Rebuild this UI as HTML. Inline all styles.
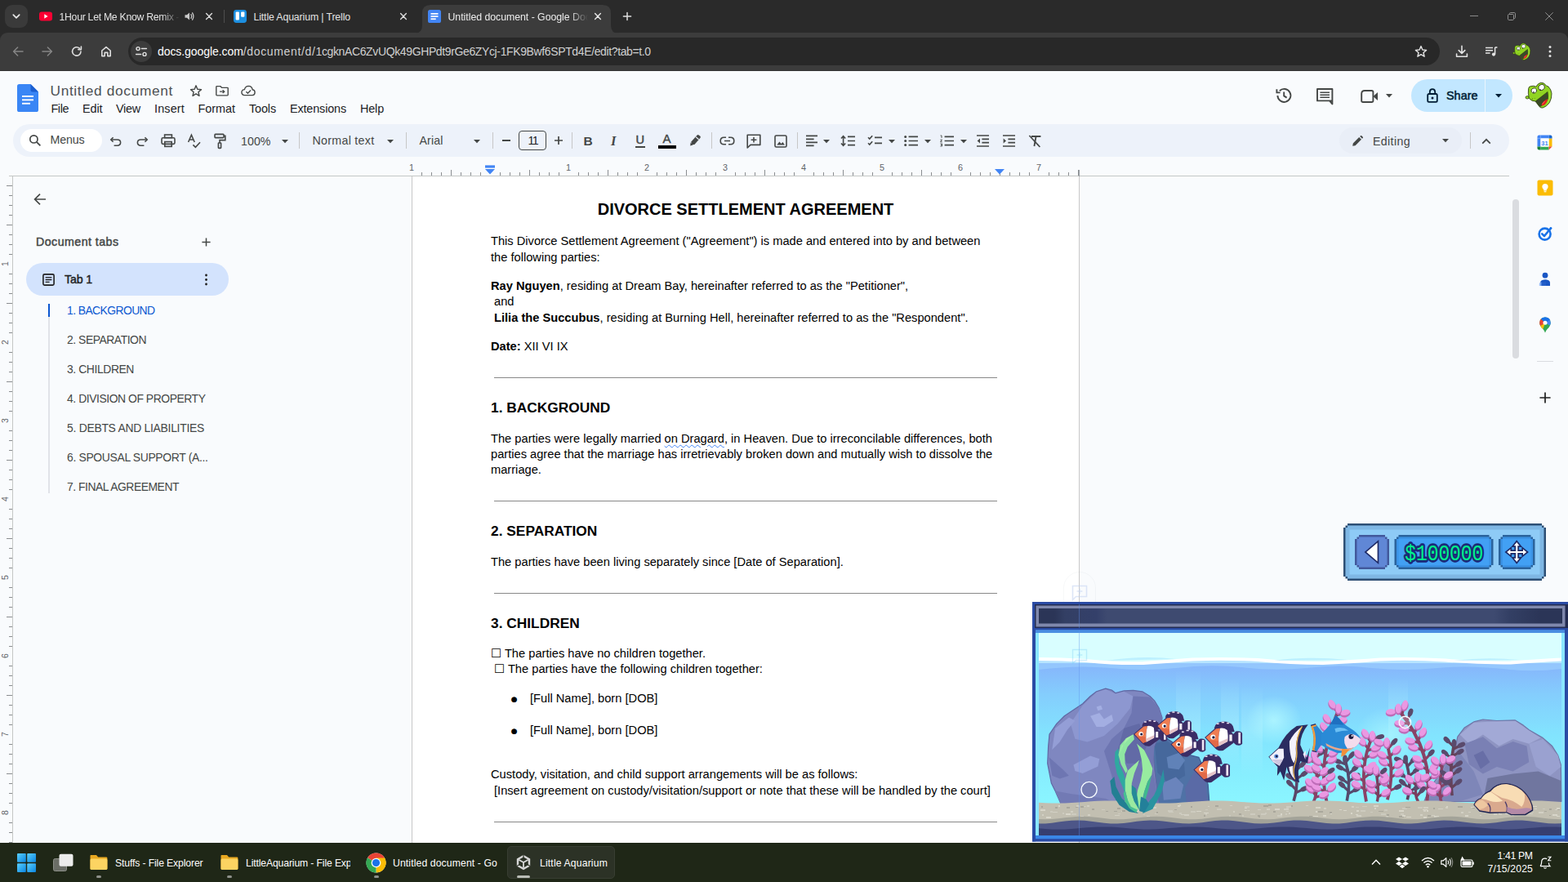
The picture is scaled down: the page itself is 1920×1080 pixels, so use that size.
<!DOCTYPE html>
<html lang="en">
<head>
<meta charset="utf-8">
<title>Untitled document - Google Docs</title>
<style>
*{box-sizing:border-box;margin:0;padding:0}
html,body{width:1920px;height:1080px;overflow:hidden;background:#f9fbfd;font-family:"Liberation Sans",sans-serif;}
.abs{position:absolute}
.t{position:absolute;white-space:nowrap;line-height:1}
svg{position:absolute;overflow:visible}
/* ---------- chrome ---------- */
#frame{position:absolute;left:0;top:0;width:1920px;height:60px;background:#2a2a2a}
#cbar{position:absolute;left:0;top:40px;width:1920px;height:46.5px;background:#3c3c3c;border-radius:9px 9px 0 0}
#omni{position:absolute;left:157px;top:46px;width:1606px;height:34px;border-radius:17px;background:#282828}
#acttab{position:absolute;left:517px;top:6px;width:231px;height:35px;background:#3c3c3c;border-radius:10px 10px 0 0}
.ct{color:#e3e3e3;font-size:12.3px}
/* ---------- docs ---------- */
#docs{position:absolute;left:0;top:87px;width:1920px;height:945px;background:#f9fbfd}
#tb{position:absolute;left:16px;top:152px;width:1832px;height:40px;border-radius:20px;background:#edf2fa}
.menu{color:#202124;font-size:14.6px;top:126px}
.ic{stroke:#444746;fill:none;stroke-width:1.6}
.sep{position:absolute;top:162px;width:1px;height:20px;background:#c7c7c7}
/* ---------- page ---------- */
#page{position:absolute;left:504px;top:216px;width:818px;height:816px;background:#fff;border-left:1px solid #c8c8c8;border-right:1px solid #c8c8c8}
.d{position:absolute;white-space:nowrap;color:#000;font-size:14.667px;line-height:17px;left:601px}
.h{position:absolute;white-space:nowrap;color:#000;font-size:17.333px;font-weight:bold;line-height:20px;left:601px}
.hr{position:absolute;left:605px;width:616px;height:1px;background:#888}
.ol{position:absolute;white-space:nowrap;color:#444746;font-size:14px;left:82px;line-height:16px}
/* ---------- taskbar ---------- */
#task{position:absolute;left:0;top:1031.5px;width:1920px;height:48.5px;background:#1f2717}
.tk{color:#fff;font-size:12.4px}
</style>
</head>
<body>
<div id="frame"></div>
<div id="cbar"></div>
<div class="abs" style="z-index:3;left:0;top:86px;width:1920px;height:1px;background:#343434"></div>
<!-- tab search -->
<div class="abs" style="left:6px;top:6px;width:28px;height:28px;border-radius:9px;background:#3a3a3a"></div>
<svg style="left:14px;top:14px" width="12" height="12" viewBox="0 0 12 12"><path d="M2.3 4.2 L6 7.8 L9.7 4.2" fill="none" stroke="#e8e8e8" stroke-width="1.7" stroke-linecap="round" stroke-linejoin="round"/></svg>
<!-- tab 1: youtube -->
<svg style="left:48px;top:14px" width="16" height="12" viewBox="0 0 16 12"><rect x="0" y="0.5" width="16" height="11" rx="3" fill="#ff0033"/><path d="M6.3 3.3 L10.6 6 L6.3 8.7Z" fill="#fff"/></svg>
<div class="abs" style="left:72px;top:8px;width:150px;height:24px;overflow:hidden;-webkit-mask-image:linear-gradient(90deg,#000 0,#000 126px,transparent 148px);mask-image:linear-gradient(90deg,#000 0,#000 126px,transparent 148px)"><span class="t" style="left:0.5px;top:4.7px;line-height:17px;font-size:12.3px;font-weight:normal;color:#e3e3e3;letter-spacing:-0.302px;">1Hour Let Me Know Remix - YouTube</span></div>
<svg style="left:225px;top:13px" width="14" height="14" viewBox="0 0 14 14"><path d="M1.5 5.2 H3.8 L7 2.4 V11.6 L3.8 8.8 H1.5Z" fill="#c9c9c9"/><path d="M9 4.6 Q10.4 7 9 9.4" fill="none" stroke="#c9c9c9" stroke-width="1.3" stroke-linecap="round"/><path d="M10.6 2.8 Q13.2 7 10.6 11.2" fill="none" stroke="#c9c9c9" stroke-width="1.3" stroke-linecap="round"/></svg>
<svg style="left:252px;top:16px" width="8" height="8" viewBox="0 0 8 8"><path d="M0.6 0.6 L7.4 7.4 M7.4 0.6 L0.6 7.4" stroke="#dcdcdc" stroke-width="1.4" fill="none" stroke-linecap="round"/></svg>
<div class="abs" style="left:274px;top:12px;width:1px;height:16px;background:#4d4d4d"></div>
<!-- tab 2: trello -->
<svg style="left:286px;top:12px" width="16" height="16" viewBox="0 0 16 16"><rect width="16" height="16" rx="3.4" fill="#1d8fe0"/><rect x="2.6" y="2.6" width="4.3" height="10" rx="1" fill="#fff"/><rect x="9.1" y="2.6" width="4.3" height="6.2" rx="1" fill="#fff"/></svg>
<span class="t" style="left:310.5px;top:12.7px;line-height:17px;font-size:12.3px;font-weight:normal;color:#e3e3e3;letter-spacing:-0.122px;">Little Aquarium &#124; Trello</span>
<svg style="left:490px;top:16px" width="8" height="8" viewBox="0 0 8 8"><path d="M0.6 0.6 L7.4 7.4 M7.4 0.6 L0.6 7.4" stroke="#dcdcdc" stroke-width="1.4" fill="none" stroke-linecap="round"/></svg>
<!-- active tab -->
<svg style="left:507px;top:6px" width="252" height="35" viewBox="0 0 252 35"><path d="M0 35 Q10 35 10 25 V10 Q10 0 20 0 H231 Q241 0 241 10 V25 Q241 35 251 35Z" fill="#3c3c3c"/></svg>
<svg style="left:524px;top:12px" width="16" height="16" viewBox="0 0 16 16"><rect width="16" height="16" rx="2.6" fill="#4285f4"/><rect x="3.5" y="4" width="9" height="1.7" fill="#fff"/><rect x="3.5" y="7.2" width="9" height="1.7" fill="#fff"/><rect x="3.5" y="10.4" width="6.2" height="1.7" fill="#fff"/></svg>
<div class="abs" style="left:548px;top:8px;width:174px;height:24px;overflow:hidden;-webkit-mask-image:linear-gradient(90deg,#000 0,#000 150px,transparent 172px);mask-image:linear-gradient(90deg,#000 0,#000 150px,transparent 172px)"><span class="t" style="left:0.5px;top:4.7px;line-height:17px;font-size:12.3px;font-weight:normal;color:#ececec;letter-spacing:-0.021px;">Untitled document - Google Docs</span></div>
<svg style="left:728px;top:16px" width="8" height="8" viewBox="0 0 8 8"><path d="M0.6 0.6 L7.4 7.4 M7.4 0.6 L0.6 7.4" stroke="#e8e8e8" stroke-width="1.4" fill="none" stroke-linecap="round"/></svg>
<svg style="left:763px;top:15px" width="10" height="10" viewBox="0 0 10 10"><path d="M5 0.4 V9.6 M0.4 5 H9.6" stroke="#e0e0e0" stroke-width="1.5" fill="none" stroke-linecap="round"/></svg>
<!-- window controls -->
<div class="abs" style="left:1800px;top:19px;width:10px;height:1px;background:#8a8a8a"></div>
<svg style="left:1846px;top:15px" width="10" height="10" viewBox="0 0 10 10"><rect x="0.5" y="2.5" width="7" height="7" rx="1.2" fill="none" stroke="#8f8f8f"/><path d="M2.5 2.2 V1.6 Q2.5 0.5 3.6 0.5 H8.2 Q9.5 0.5 9.5 1.8 V6.4 Q9.5 7.5 8.4 7.5 H7.8" fill="none" stroke="#8f8f8f"/></svg>
<svg style="left:1892px;top:15px" width="10" height="10" viewBox="0 0 10 10"><path d="M0.3 0.3 L9.7 9.7 M9.7 0.3 L0.3 9.7" stroke="#8f8f8f" stroke-width="1" fill="none"/></svg>
<!-- nav buttons -->
<svg style="left:15px;top:56px" width="14" height="14" viewBox="0 0 14 14"><path d="M13 7 H2 M6.6 2 L1.6 7 L6.6 12" fill="none" stroke="#858585" stroke-width="1.5" stroke-linecap="round" stroke-linejoin="round"/></svg>
<svg style="left:51px;top:56px" width="14" height="14" viewBox="0 0 14 14"><path d="M1 7 H12 M7.4 2 L12.4 7 L7.4 12" fill="none" stroke="#858585" stroke-width="1.5" stroke-linecap="round" stroke-linejoin="round"/></svg>
<svg style="left:87px;top:56px" width="14" height="14" viewBox="0 0 14 14"><path d="M12 7 A5.2 5.2 0 1 1 10.4 3.2" fill="none" stroke="#dedede" stroke-width="1.6" stroke-linecap="round"/><path d="M12.4 1 V4.6 H8.8" fill="none" stroke="#dedede" stroke-width="1.6" stroke-linecap="round" stroke-linejoin="round"/></svg>
<svg style="left:123px;top:56px" width="14" height="14" viewBox="0 0 14 14"><path d="M1.8 6 L7 1.6 L12.2 6 V12.6 H8.8 V8.4 H5.2 V12.6 H1.8Z" fill="none" stroke="#dedede" stroke-width="1.6" stroke-linejoin="round"/></svg>
<!-- omnibox -->
<div id="omni"></div>
<div class="abs" style="left:160px;top:50px;width:26px;height:26px;border-radius:13px;background:#3c3c3c"></div>
<svg style="left:165px;top:56px" width="16" height="14" viewBox="0 0 16 14"><circle cx="4" cy="3.6" r="2" fill="none" stroke="#e3e3e3" stroke-width="1.4"/><path d="M8.4 3.6 H14.4" stroke="#e3e3e3" stroke-width="1.5" stroke-linecap="round"/><circle cx="12" cy="10.4" r="2" fill="none" stroke="#e3e3e3" stroke-width="1.4"/><path d="M1.6 10.4 H7.6" stroke="#e3e3e3" stroke-width="1.5" stroke-linecap="round"/></svg>
<span class="t" style="left:193px;top:53.3px;line-height:20px;font-size:14px;font-weight:normal;color:#ffffff;letter-spacing:-0.070px;">docs.google.com</span><span class="t" style="left:297.8px;top:53.3px;line-height:20px;font-size:14px;font-weight:normal;color:#d0d0d0;letter-spacing:0.647px;">/document/d/</span><span class="t" style="left:386.5px;top:53.3px;line-height:20px;font-size:14px;font-weight:normal;color:#d0d0d0;letter-spacing:-0.372px;">1cgknAC6ZvUQk49GHPdt9rGe6ZYcj-1FK9Bwf6SPTd4E/edit?tab=t.0</span>
<svg style="left:1732px;top:55px" width="16" height="16" viewBox="0 0 16 16"><path d="M8 1.6 L9.9 6 L14.6 6.4 L11 9.5 L12.1 14.2 L8 11.7 L3.9 14.2 L5 9.5 L1.4 6.4 L6.1 6Z" fill="none" stroke="#e3e3e3" stroke-width="1.4" stroke-linejoin="round"/></svg>
<svg style="left:1782px;top:55px" width="16" height="16" viewBox="0 0 16 16"><path d="M8 1.4 V10 M4.2 6.6 L8 10.4 L11.8 6.6" fill="none" stroke="#e3e3e3" stroke-width="1.6" stroke-linecap="round" stroke-linejoin="round"/><path d="M1.6 11 V14.2 H14.4 V11" fill="none" stroke="#e3e3e3" stroke-width="1.6" stroke-linejoin="round" stroke-linecap="round"/></svg>
<svg style="left:1818px;top:55px" width="16" height="16" viewBox="0 0 16 16"><path d="M1 3.6 H10 M1 6.8 H10 M1 10 H6.6" stroke="#e3e3e3" stroke-width="1.5" fill="none"/><path d="M12.6 3 V11.4" stroke="#e3e3e3" stroke-width="1.5"/><path d="M12.6 3 H15.4" stroke="#e3e3e3" stroke-width="1.6"/><circle cx="11" cy="11.6" r="2.1" fill="#e3e3e3"/></svg>
<!-- frog avatar -->
<svg style="left:1846.62px;top:48.13px" width="33.59" height="30.91" viewBox="0 0 50 46"><ellipse cx="10.2" cy="25.3" rx="2.2" ry="1.7" fill="#93d624" stroke="#22300c" stroke-width="0.7"/><path d="M12.3 26.4 Q10.8 20 11.6 14.4 Q12 11.8 14.6 11.5 Q18 10.6 21 12.2 Q22.4 8.6 26.6 7.2 Q31 6.8 33.4 11 L36 12 Q39.4 15.4 40 20.4 Q40.2 26.4 37.4 31.6 Q34 36.6 29.2 38 Q26.6 38.4 25.2 36.8 L20 30 Q16 30.4 12.3 26.4Z" fill="#90d422" stroke="#22300c" stroke-width="0.8" stroke-linejoin="round"/><path d="M13.4 14.6 Q16 12.6 20.4 13.2 L22 17 L15 21Z" fill="#a4e038" opacity="0.7"/><path d="M36.6 15 Q39 19 38.8 24 Q38 30 34 34.6 Q37 28 37 22Z" fill="#a8e23c" opacity="0.8"/><path d="M20.4 29.8 L35 18.4 Q35.8 23 35.4 27 Q33 33 27.6 35.6 L25.6 36.6Z" fill="#3b4a28" stroke="#1c260c" stroke-width="0.5"/><path d="M27.4 35.2 Q28.4 30.2 34.9 27 Q35 31 31.4 34.2 Q29.4 35.8 27.4 35.2Z" fill="#e6201c"/><path d="M28.6 33.6 Q29.6 31.4 31.6 30.2" stroke="#ff8a80" stroke-width="0.7" fill="none"/><ellipse cx="18.3" cy="17" rx="3.3" ry="3.1" fill="#fff" stroke="#22300c" stroke-width="0.8" transform="rotate(-25 18.3 17)"/><ellipse cx="27.6" cy="13" rx="3.8" ry="3.4" fill="#fff" stroke="#22300c" stroke-width="0.8" transform="rotate(-25 27.6 13)"/><circle cx="17.9" cy="18.9" r="0.9" fill="#3a3a3a"/><circle cx="26.2" cy="16.2" r="0.9" fill="#2a2a2a"/><circle cx="16.3" cy="27" r="0.5" fill="#22300c"/><circle cx="19.2" cy="26.3" r="0.45" fill="#4a6a14"/></svg>
<svg style="left:1895px;top:55px" width="6" height="16" viewBox="0 0 6 16"><circle cx="3" cy="2.6" r="1.5" fill="#e3e3e3"/><circle cx="3" cy="8" r="1.5" fill="#e3e3e3"/><circle cx="3" cy="13.4" r="1.5" fill="#e3e3e3"/></svg>

<div id="docs"></div>
<!-- docs logo -->
<svg style="left:21px;top:103px" width="26" height="34" viewBox="0 0 26 34"><path d="M2.6 0 H16.5 L26 9.5 V31.4 Q26 34 23.4 34 H2.6 Q0 34 0 31.4 V2.6 Q0 0 2.6 0Z" fill="#3a86f5"/><path d="M16.5 0 L26 9.5 H18.8 Q16.5 9.5 16.5 7.2Z" fill="#1c5fd0"/><rect x="6" y="14" width="14" height="1.9" fill="#fff"/><rect x="6" y="18.4" width="14" height="1.9" fill="#fff"/><rect x="6" y="22.8" width="10" height="1.9" fill="#fff"/></svg>
<span class="t" style="left:61.5px;top:98.6px;line-height:24px;font-size:17.3px;font-weight:normal;color:#4d5053;letter-spacing:0.659px;">Untitled document</span>
<svg style="left:232px;top:103px" width="16" height="16" viewBox="0 0 16 16"><path d="M8 1.8 L9.8 6.2 L14.5 6.6 L10.9 9.7 L12 14.3 L8 11.8 L4 14.3 L5.1 9.7 L1.5 6.6 L6.2 6.2Z" fill="none" stroke="#444746" stroke-width="1.4" stroke-linejoin="round"/></svg>
<svg style="left:264px;top:105px" width="16" height="12.5" viewBox="0 0 16 14" preserveAspectRatio="none"><path d="M1.6 0.8 H6 L7.6 2.6 H14.4 Q15.2 2.6 15.2 3.4 V12.4 Q15.2 13.2 14.4 13.2 H1.6 Q0.8 13.2 0.8 12.4 V1.6 Q0.8 0.8 1.6 0.8Z" fill="none" stroke="#444746" stroke-width="1.4"/><path d="M5 8 H10.6 M8.6 5.8 L10.8 8 L8.6 10.2" fill="none" stroke="#444746" stroke-width="1.3"/></svg>
<svg style="left:295px;top:104px" width="18" height="14" viewBox="0 0 18 14"><path d="M4.6 12.6 Q0.9 12.4 0.9 9 Q1 5.8 4.4 5.6 Q5.4 1.4 9.4 1.4 Q13.4 1.5 14.2 5.8 Q17.1 6.2 17.1 9.2 Q17 12.4 14 12.6Z" fill="none" stroke="#444746" stroke-width="1.4"/><path d="M6.4 8.2 L8.4 10.2 L12 6.4" fill="none" stroke="#444746" stroke-width="1.4"/></svg>
<span class="t" style="left:62.5px;top:123.3px;line-height:20px;font-size:14.4px;font-weight:normal;color:#202124;letter-spacing:-0.426px;">File</span>
<span class="t" style="left:101px;top:123.3px;line-height:20px;font-size:14.4px;font-weight:normal;color:#202124;letter-spacing:-0.078px;">Edit</span>
<span class="t" style="left:142px;top:123.3px;line-height:20px;font-size:14.4px;font-weight:normal;color:#202124;letter-spacing:-0.234px;">View</span>
<span class="t" style="left:189px;top:123.3px;line-height:20px;font-size:14.4px;font-weight:normal;color:#202124;letter-spacing:0.167px;">Insert</span>
<span class="t" style="left:242.5px;top:123.3px;line-height:20px;font-size:14.4px;font-weight:normal;color:#202124;letter-spacing:-0.013px;">Format</span>
<span class="t" style="left:305px;top:123.3px;line-height:20px;font-size:14.4px;font-weight:normal;color:#202124;letter-spacing:-0.119px;">Tools</span>
<span class="t" style="left:355px;top:123.3px;line-height:20px;font-size:14.4px;font-weight:normal;color:#202124;letter-spacing:-0.141px;">Extensions</span>
<span class="t" style="left:441px;top:123.3px;line-height:20px;font-size:14.4px;font-weight:normal;color:#202124;letter-spacing:-0.152px;">Help</span>
<!-- right header icons -->
<svg style="left:1561px;top:106px" width="22" height="22" viewBox="0 0 22 22"><path d="M3.4 11 A8 8 0 1 0 5.8 5.2" fill="none" stroke="#444746" stroke-width="1.9"/><path d="M2.4 3.2 V7.4 H6.6" fill="none" stroke="#444746" stroke-width="1.9"/><path d="M11.2 6.6 V11.4 L14.6 13.6" fill="none" stroke="#444746" stroke-width="1.9"/></svg>
<svg style="left:1612px;top:108px" width="21" height="21" viewBox="0 0 21 21"><path d="M1 1 H19.4 V15.4 H16 L19.4 19.4 V15.4 H1Z" fill="none" stroke="#444746" stroke-width="1.9" stroke-linejoin="round"/><path d="M4.4 5.2 H16 M4.4 8.2 H16 M4.4 11.2 H16" stroke="#444746" stroke-width="1.5"/></svg>
<svg style="left:1666px;top:110px" width="22" height="16" viewBox="0 0 22 16"><path d="M5 1 H13.6 Q15.4 1 15.4 2.8 V13.2 Q15.4 15 13.6 15 H3 Q1.2 15 1.2 13.2 V4.8 Q1.2 1 5 1Z" fill="none" stroke="#444746" stroke-width="1.9"/><path d="M15.4 8 L21 3 V13Z" fill="#444746"/></svg>
<svg style="left:1697px;top:115px" width="8" height="5" viewBox="0 0 8 5"><path d="M0 0 H8 L4 4.4Z" fill="#444746"/></svg>
<!-- share -->
<div class="abs" style="left:1728px;top:97px;width:124px;height:40px;border-radius:20px;background:#c2e7ff"></div>
<div class="abs" style="left:1818px;top:97px;width:1px;height:40px;background:#eaf5fd"></div>
<svg style="left:1747px;top:108px" width="14" height="18" viewBox="0 0 14 18"><rect x="1.2" y="7" width="11.6" height="9.8" rx="1.6" fill="none" stroke="#001d35" stroke-width="1.8"/><path d="M3.8 7 V4.6 Q3.8 1.2 7 1.2 Q10.2 1.2 10.2 4.6 V7" fill="none" stroke="#001d35" stroke-width="1.8"/><circle cx="7" cy="12" r="1.5" fill="#001d35"/></svg>
<span class="t" style="left:1771px;top:107.3px;line-height:20px;font-size:14.4px;font-weight:normal;color:#001d35;letter-spacing:0.019px;-webkit-text-stroke:0.5px #001d35;">Share</span>
<svg style="left:1831px;top:115px" width="8" height="5" viewBox="0 0 8 5"><path d="M0 0 H8 L4 4.4Z" fill="#001d35"/></svg>
<!-- frog avatar big -->
<svg style="left:1860px;top:94px" width="50" height="46" viewBox="0 0 50 46"><ellipse cx="10.2" cy="25.3" rx="2.2" ry="1.7" fill="#93d624" stroke="#22300c" stroke-width="0.7"/><path d="M12.3 26.4 Q10.8 20 11.6 14.4 Q12 11.8 14.6 11.5 Q18 10.6 21 12.2 Q22.4 8.6 26.6 7.2 Q31 6.8 33.4 11 L36 12 Q39.4 15.4 40 20.4 Q40.2 26.4 37.4 31.6 Q34 36.6 29.2 38 Q26.6 38.4 25.2 36.8 L20 30 Q16 30.4 12.3 26.4Z" fill="#90d422" stroke="#22300c" stroke-width="0.8" stroke-linejoin="round"/><path d="M13.4 14.6 Q16 12.6 20.4 13.2 L22 17 L15 21Z" fill="#a4e038" opacity="0.7"/><path d="M36.6 15 Q39 19 38.8 24 Q38 30 34 34.6 Q37 28 37 22Z" fill="#a8e23c" opacity="0.8"/><path d="M20.4 29.8 L35 18.4 Q35.8 23 35.4 27 Q33 33 27.6 35.6 L25.6 36.6Z" fill="#3b4a28" stroke="#1c260c" stroke-width="0.5"/><path d="M27.4 35.2 Q28.4 30.2 34.9 27 Q35 31 31.4 34.2 Q29.4 35.8 27.4 35.2Z" fill="#e6201c"/><path d="M28.6 33.6 Q29.6 31.4 31.6 30.2" stroke="#ff8a80" stroke-width="0.7" fill="none"/><ellipse cx="18.3" cy="17" rx="3.3" ry="3.1" fill="#fff" stroke="#22300c" stroke-width="0.8" transform="rotate(-25 18.3 17)"/><ellipse cx="27.6" cy="13" rx="3.8" ry="3.4" fill="#fff" stroke="#22300c" stroke-width="0.8" transform="rotate(-25 27.6 13)"/><circle cx="17.9" cy="18.9" r="0.9" fill="#3a3a3a"/><circle cx="26.2" cy="16.2" r="0.9" fill="#2a2a2a"/><circle cx="16.3" cy="27" r="0.5" fill="#22300c"/><circle cx="19.2" cy="26.3" r="0.45" fill="#4a6a14"/></svg>
<!-- toolbar -->
<div id="tb"></div>
<div class="abs" style="left:25px;top:158px;width:100px;height:28px;border-radius:14px;background:#fff"></div>
<svg style="left:35px;top:164px" width="16" height="16" viewBox="0 0 16 16"><circle cx="6.4" cy="6.4" r="4.6" fill="none" stroke="#444746" stroke-width="1.7"/><path d="M9.8 9.8 L14.4 14.4" stroke="#444746" stroke-width="1.8"/></svg>
<span class="t" style="left:61.5px;top:161.3px;line-height:20px;font-size:14.2px;font-weight:normal;color:#444746;letter-spacing:-0.119px;">Menus</span>
<svg style="left:134px;top:165px" width="16" height="16" viewBox="0 0 16 16"><path d="M4.6 3.2 L1.8 6 L4.6 8.8" class="ic"/><path d="M2 6 H9.6 Q13.6 6 13.6 9.6 Q13.6 13.2 9.6 13.2 H5.6" class="ic"/></svg>
<svg style="left:166px;top:165px" width="16" height="16" viewBox="0 0 16 16"><path d="M11.4 3.2 L14.2 6 L11.4 8.8" class="ic"/><path d="M14 6 H6.4 Q2.4 6 2.4 9.6 Q2.4 13.2 6.4 13.2 H10.4" class="ic"/></svg>
<svg style="left:197px;top:164px" width="18" height="17" viewBox="0 0 18 17"><rect x="4.6" y="1" width="8.8" height="3.6" class="ic"/><rect x="1" y="4.8" width="16" height="7.6" rx="1.6" class="ic"/><rect x="4.8" y="9.6" width="8.4" height="5.8" fill="#edf2fa" class="ic"/></svg>
<svg style="left:229px;top:164px" width="18" height="18" viewBox="0 0 18 18"><path d="M1.6 10 L5.4 1.2 L9.2 10 M3 7 H7.8" class="ic"/><path d="M7.4 13.4 L10.4 16.4 L16 10.2" class="ic"/></svg>
<svg style="left:261px;top:163px" width="16" height="20" viewBox="0 0 16 20"><rect x="2" y="1.4" width="11" height="4.2" rx="0.8" class="ic"/><path d="M13 3.4 H14.8 V8.6 H8 V12" class="ic"/><rect x="6.4" y="12" width="3.2" height="6.4" rx="0.6" class="ic"/></svg>
<span class="t" style="left:295px;top:163.3px;line-height:20px;font-size:14.2px;font-weight:normal;color:#444746;letter-spacing:0.051px;">100%</span>
<svg style="left:345px;top:171px" width="8" height="5" viewBox="0 0 8 5"><path d="M0 0 H8 L4 4.2Z" fill="#444746"/></svg>
<div class="sep" style="left:366px"></div>
<span class="t" style="left:382.5px;top:162.3px;line-height:20px;font-size:14.2px;font-weight:normal;color:#444746;letter-spacing:0.315px;">Normal text</span>
<svg style="left:474px;top:171px" width="8" height="5" viewBox="0 0 8 5"><path d="M0 0 H8 L4 4.2Z" fill="#444746"/></svg>
<div class="sep" style="left:497px"></div>
<span class="t" style="left:513.5px;top:162.3px;line-height:20px;font-size:14.2px;font-weight:normal;color:#444746;letter-spacing:0.122px;">Arial</span>
<svg style="left:580px;top:171px" width="8" height="5" viewBox="0 0 8 5"><path d="M0 0 H8 L4 4.2Z" fill="#444746"/></svg>
<div class="sep" style="left:603px"></div>
<div class="abs" style="left:615px;top:171px;width:10px;height:2px;background:#444746"></div>
<div class="abs" style="left:635px;top:160px;width:34px;height:24px;border:1px solid #444746;border-radius:4px"></div>
<span class="t" style="left:646.5px;top:162.3px;line-height:20px;font-size:14.2px;font-weight:normal;color:#202124;letter-spacing:-1.617px;">11</span>
<svg style="left:678px;top:166px" width="12" height="12" viewBox="0 0 12 12"><path d="M6 1 V11 M1 6 H11" stroke="#444746" stroke-width="1.7" fill="none"/></svg>
<div class="sep" style="left:700px"></div>
<span class="t" style="left:714.5px;top:162px;line-height:22px;font-size:15.5px;font-weight:bold;color:#444746;letter-spacing:-0.703px;">B</span>
<span class="t" style="left:748px;top:161.1px;line-height:23px;font-size:16.5px;font-weight:bold;color:#444746;letter-spacing:3.406px;font-family:'Liberation Serif',serif;font-style:italic;">I</span>
<span class="t" style="left:778.6px;top:161.4px;line-height:20px;font-size:14.6px;font-weight:normal;color:#444746;letter-spacing:0.253px;-webkit-text-stroke:0.5px #444746;">U</span><div class="abs" style="left:778px;top:179px;width:12px;height:1.6px;background:#444746"></div>
<span class="t" style="left:811.6px;top:159.1px;line-height:21px;font-size:15px;font-weight:normal;color:#444746;letter-spacing:0.784px;-webkit-text-stroke:0.4px #444746;">A</span>
<div class="abs" style="left:806px;top:178px;width:22px;height:4px;background:#000"></div>
<svg style="left:842px;top:162px" width="18" height="18" viewBox="0 0 18 18"><path d="M4.4 11.6 L11.6 3.4 Q12.6 2.4 13.8 3.4 L15.4 4.8 Q16.4 5.8 15.4 7 L8.4 15 L4.6 15.2Z" fill="#444746"/><path d="M3.6 12.6 L6.4 15.4 L3.2 16.6Z" fill="#444746"/><path d="M10 5.6 L13.6 8.8" stroke="#edf2fa" stroke-width="1.2"/></svg>
<div class="sep" style="left:871px"></div>
<svg style="left:881px;top:167px" width="19" height="11" viewBox="0 0 19 11"><path d="M8 1.2 H5.4 Q1.2 1.2 1.2 5.5 Q1.2 9.8 5.4 9.8 H8 M11 1.2 H13.6 Q17.8 1.2 17.8 5.5 Q17.8 9.8 13.6 9.8 H11 M6 5.5 H13" class="ic" stroke-width="1.8"/></svg>
<svg style="left:914px;top:164px" width="18" height="18" viewBox="0 0 18 18"><path d="M1.2 1.2 H16.8 V13.4 H5 L1.2 17Z" class="ic" stroke-linejoin="round"/><path d="M9 4 V10.6 M5.6 7.3 H12.4" class="ic"/></svg>
<svg style="left:948px;top:165px" width="16" height="16" viewBox="0 0 16 16"><rect x="1" y="1" width="14" height="14" rx="1.6" class="ic"/><path d="M3.2 12.4 L6.4 8.4 L8.6 11 L10.4 9 L13 12.4Z" fill="#444746"/></svg>
<div class="sep" style="left:976px"></div>
<svg style="left:987px;top:165px" width="14" height="15" viewBox="0 0 14 15"><path d="M0 1.4 H14 M0 5.4 H9.6 M0 9.4 H14 M0 13.4 H9.6" stroke="#444746" stroke-width="1.6"/></svg>
<svg style="left:1008px;top:171px" width="8" height="5" viewBox="0 0 8 5"><path d="M0 0 H8 L4 4.2Z" fill="#444746"/></svg>
<svg style="left:1029px;top:165px" width="18" height="15" viewBox="0 0 18 15"><path d="M3.6 2 V13 M1 4.6 L3.6 1.6 L6.2 4.6 M1 10.4 L3.6 13.4 L6.2 10.4" class="ic"/><path d="M9 2.4 H18 M9 7.5 H18 M9 12.6 H18" stroke="#444746" stroke-width="1.6"/></svg>
<svg style="left:1062px;top:165px" width="18" height="15" viewBox="0 0 18 15"><path d="M1 3.2 L2.8 5 L6.2 1.2 M1 10.2 L2.8 12 L6.2 8.2" class="ic"/><path d="M9 3.4 H18 M9 10.4 H18" stroke="#444746" stroke-width="1.7"/></svg>
<svg style="left:1088px;top:171px" width="8" height="5" viewBox="0 0 8 5"><path d="M0 0 H8 L4 4.2Z" fill="#444746"/></svg>
<svg style="left:1107px;top:165px" width="17" height="15" viewBox="0 0 17 15"><circle cx="1.7" cy="2.4" r="1.5" fill="#444746"/><circle cx="1.7" cy="7.5" r="1.5" fill="#444746"/><circle cx="1.7" cy="12.6" r="1.5" fill="#444746"/><path d="M5.6 2.4 H17 M5.6 7.5 H17 M5.6 12.6 H17" stroke="#444746" stroke-width="1.7"/></svg>
<svg style="left:1132px;top:171px" width="8" height="5" viewBox="0 0 8 5"><path d="M0 0 H8 L4 4.2Z" fill="#444746"/></svg>
<svg style="left:1151px;top:165px" width="17" height="15" viewBox="0 0 17 15"><path d="M0.6 1 H2 V4 M0.4 6.2 H2.6 L0.4 8.8 H2.8 M0.4 11 H2.6 V14 H0.4 M1 12.5 H2.6" fill="none" stroke="#444746" stroke-width="0.9"/><path d="M5.6 2.4 H17 M5.6 7.5 H17 M5.6 12.6 H17" stroke="#444746" stroke-width="1.7"/></svg>
<svg style="left:1176px;top:171px" width="8" height="5" viewBox="0 0 8 5"><path d="M0 0 H8 L4 4.2Z" fill="#444746"/></svg>
<svg style="left:1196px;top:165px" width="15" height="15" viewBox="0 0 15 15"><path d="M0 1 H15 M6.4 5.4 H15 M6.4 9.6 H15 M0 14 H15" stroke="#444746" stroke-width="1.6"/><path d="M4 4.6 V10.4 L0.6 7.5Z" fill="#444746"/></svg>
<svg style="left:1228px;top:165px" width="15" height="15" viewBox="0 0 15 15"><path d="M0 1 H15 M6.4 5.4 H15 M6.4 9.6 H15 M0 14 H15" stroke="#444746" stroke-width="1.6"/><path d="M0.6 4.6 V10.4 L4 7.5Z" fill="#444746"/></svg>
<svg style="left:1259px;top:165px" width="17" height="16" viewBox="0 0 17 16"><path d="M4 2 H15.4 M9.6 2 L7.4 14" stroke="#444746" stroke-width="1.8" fill="none"/><path d="M1.4 1 L14.4 15" stroke="#444746" stroke-width="1.7"/></svg>
<!-- editing -->
<div class="abs" style="left:1640px;top:156px;width:150px;height:32px;border-radius:16px;background:#e9eef7"></div>
<svg style="left:1655px;top:165px" width="15" height="15" viewBox="0 0 15 15"><path d="M1.2 13.8 L1.8 10.4 L9.2 3 L12 5.800 L4.6 13.2 Z M10.2 2 L11 1.2 Q11.8 0.600 12.6 1.4 L13.600 2.400 Q14.4 3.200 13.800 4 L13 4.800Z" fill="#444746"/></svg>
<span class="t" style="left:1681px;top:162.5px;line-height:20px;font-size:14.2px;font-weight:normal;color:#444746;letter-spacing:0.373px;">Editing</span>
<svg style="left:1766px;top:170px" width="8" height="5" viewBox="0 0 8 5"><path d="M0 0 H8 L4 4.2Z" fill="#444746"/></svg>
<div class="sep" style="left:1800px"></div>
<svg style="left:1814px;top:169px" width="12" height="8" viewBox="0 0 12 8"><path d="M1.2 6.6 L6 1.8 L10.8 6.6" fill="none" stroke="#444746" stroke-width="1.7"/></svg>

<svg style="left:41px;top:236px" width="16" height="16" viewBox="0 0 16 16"><path d="M15 8 H2 M8 1.6 L1.6 8 L8 14.4" fill="none" stroke="#444746" stroke-width="1.7"/></svg>
<span class="t" style="left:44px;top:286.3px;line-height:20px;font-size:14.2px;font-weight:normal;color:#444746;letter-spacing:0.468px;-webkit-text-stroke:0.45px #444746;">Document tabs</span>
<svg style="left:247px;top:291px" width="11" height="11" viewBox="0 0 11 11"><path d="M5.5 0.4 V10.6 M0.4 5.5 H10.6" stroke="#444746" stroke-width="1.5" fill="none"/></svg>
<div class="abs" style="left:32px;top:322px;width:248px;height:40px;border-radius:20px;background:#d3e3fd"></div>
<svg style="left:52px;top:335px" width="15" height="15" viewBox="0 0 15 15"><rect x="0.9" y="0.9" width="13.2" height="13.2" rx="1.6" fill="none" stroke="#1f1f1f" stroke-width="1.6"/><path d="M3.6 4.6 H11.4 M3.6 7.5 H11.4 M3.6 10.4 H8.6" stroke="#1f1f1f" stroke-width="1.4"/></svg>
<span class="t" style="left:79px;top:332.3px;line-height:20px;font-size:14.2px;font-weight:normal;color:#1f1f1f;letter-spacing:-0.144px;-webkit-text-stroke:0.45px #1f1f1f;">Tab 1</span>
<svg style="left:250px;top:335px" width="5" height="15" viewBox="0 0 5 15"><circle cx="2.5" cy="2" r="1.4" fill="#1f1f1f"/><circle cx="2.5" cy="7.5" r="1.4" fill="#1f1f1f"/><circle cx="2.5" cy="13" r="1.4" fill="#1f1f1f"/></svg>
<div class="abs" style="left:59px;top:372px;width:2px;height:232px;background:#e1e3e8"></div>
<div class="abs" style="left:59px;top:372px;width:2px;height:16px;background:#0b57d0"></div>
<span class="t" style="left:82px;top:370.8px;line-height:19px;font-size:13.9px;font-weight:normal;color:#0b57d0;letter-spacing:-0.578px;">1. BACKGROUND</span>
<span class="t" style="left:82px;top:406.8px;line-height:19px;font-size:13.9px;font-weight:normal;color:#444746;letter-spacing:-0.456px;">2. SEPARATION</span>
<span class="t" style="left:82px;top:442.8px;line-height:19px;font-size:13.9px;font-weight:normal;color:#444746;letter-spacing:-0.405px;">3. CHILDREN</span>
<span class="t" style="left:82px;top:478.8px;line-height:19px;font-size:13.9px;font-weight:normal;color:#444746;letter-spacing:-0.439px;">4. DIVISION OF PROPERTY</span>
<span class="t" style="left:82px;top:514.8px;line-height:19px;font-size:13.9px;font-weight:normal;color:#444746;letter-spacing:-0.270px;">5. DEBTS AND LIABILITIES</span>
<span class="t" style="left:82px;top:550.8px;line-height:19px;font-size:13.9px;font-weight:normal;color:#444746;letter-spacing:-0.329px;">6. SPOUSAL SUPPORT (A...</span>
<span class="t" style="left:82px;top:586.8px;line-height:19px;font-size:13.9px;font-weight:normal;color:#444746;letter-spacing:-0.465px;">7. FINAL AGREEMENT</span>
<!-- rulers -->
<div class="abs" style="left:11px;top:215px;width:1837px;height:1px;background:#c4c7c5"></div>
<svg style="left:0;top:0" width="1920" height="216" viewBox="0 0 1920 216"><path d="M516.5 211V215 M528.5 211V215 M540.5 211V215 M552.5 208V215 M564.5 211V215 M576.5 211V215 M588.5 211V215 M612.5 211V215 M624.5 211V215 M636.5 211V215 M648.5 208V215 M660.5 211V215 M672.5 211V215 M684.5 211V215 M708.5 211V215 M720.5 211V215 M732.5 211V215 M744.5 208V215 M756.5 211V215 M768.5 211V215 M780.5 211V215 M804.5 211V215 M816.5 211V215 M828.5 211V215 M840.5 208V215 M852.5 211V215 M864.5 211V215 M876.5 211V215 M900.5 211V215 M912.5 211V215 M924.5 211V215 M936.5 208V215 M948.5 211V215 M960.5 211V215 M972.5 211V215 M996.5 211V215 M1008.5 211V215 M1020.5 211V215 M1032.5 208V215 M1044.5 211V215 M1056.5 211V215 M1068.5 211V215 M1092.5 211V215 M1104.5 211V215 M1116.5 211V215 M1128.5 208V215 M1140.5 211V215 M1152.5 211V215 M1164.5 211V215 M1188.5 211V215 M1200.5 211V215 M1212.5 211V215 M1224.5 208V215 M1236.5 211V215 M1248.5 211V215 M1260.5 211V215 M1284.5 211V215 M1296.5 211V215 M1308.5 211V215 M1320.5 208V215" stroke="#8a8d90" stroke-width="1" fill="none"/><path d="M1321.5 208V216" stroke="#9aa0a6" stroke-width="1"/><path d="M594 202.4H606V205.6H594Z" fill="#4285f4"/><path d="M594 207H606L600 213.6Z" fill="#4285f4"/><path d="M1218 207H1230L1224 213.4Z" fill="#4285f4"/></svg>
<span class="t" style="left:499px;top:199px;width:10px;text-align:center;font-size:10.8px;line-height:12px;color:#5f6368">1</span>
<span class="t" style="left:691px;top:199px;width:10px;text-align:center;font-size:10.8px;line-height:12px;color:#5f6368">1</span>
<span class="t" style="left:787px;top:199px;width:10px;text-align:center;font-size:10.8px;line-height:12px;color:#5f6368">2</span>
<span class="t" style="left:883px;top:199px;width:10px;text-align:center;font-size:10.8px;line-height:12px;color:#5f6368">3</span>
<span class="t" style="left:979px;top:199px;width:10px;text-align:center;font-size:10.8px;line-height:12px;color:#5f6368">4</span>
<span class="t" style="left:1075px;top:199px;width:10px;text-align:center;font-size:10.8px;line-height:12px;color:#5f6368">5</span>
<span class="t" style="left:1171px;top:199px;width:10px;text-align:center;font-size:10.8px;line-height:12px;color:#5f6368">6</span>
<span class="t" style="left:1267px;top:199px;width:10px;text-align:center;font-size:10.8px;line-height:12px;color:#5f6368">7</span>
<div class="abs" style="left:15px;top:215px;width:1px;height:817px;background:#c4c7c5"></div>
<svg style="left:0;top:0" width="20" height="1032" viewBox="0 0 20 1032"><path d="M8 227.5H15 M11 239.5H15 M11 251.5H15 M11 263.5H15 M8 275.5H15 M11 287.5H15 M11 299.5H15 M11 311.5H15 M11 335.5H15 M11 347.5H15 M11 359.5H15 M8 371.5H15 M11 383.5H15 M11 395.5H15 M11 407.5H15 M11 431.5H15 M11 443.5H15 M11 455.5H15 M8 467.5H15 M11 479.5H15 M11 491.5H15 M11 503.5H15 M11 527.5H15 M11 539.5H15 M11 551.5H15 M8 563.5H15 M11 575.5H15 M11 587.5H15 M11 599.5H15 M11 623.5H15 M11 635.5H15 M11 647.5H15 M8 659.5H15 M11 671.5H15 M11 683.5H15 M11 695.5H15 M11 719.5H15 M11 731.5H15 M11 743.5H15 M8 755.5H15 M11 767.5H15 M11 779.5H15 M11 791.5H15 M11 815.5H15 M11 827.5H15 M11 839.5H15 M8 851.5H15 M11 863.5H15 M11 875.5H15 M11 887.5H15 M11 911.5H15 M11 923.5H15 M11 935.5H15 M8 947.5H15 M11 959.5H15 M11 971.5H15 M11 983.5H15 M11 1007.5H15 M11 1019.5H15 M11 1031.5H15" stroke="#8a8d90" stroke-width="1" fill="none"/></svg>
<span class="t" style="left:0px;top:318px;width:12px;height:10px;text-align:center;font-size:10.5px;line-height:10px;color:#5f6368;transform:rotate(-90deg);transform-origin:6px 5px">1</span>
<span class="t" style="left:0px;top:414px;width:12px;height:10px;text-align:center;font-size:10.5px;line-height:10px;color:#5f6368;transform:rotate(-90deg);transform-origin:6px 5px">2</span>
<span class="t" style="left:0px;top:510px;width:12px;height:10px;text-align:center;font-size:10.5px;line-height:10px;color:#5f6368;transform:rotate(-90deg);transform-origin:6px 5px">3</span>
<span class="t" style="left:0px;top:606px;width:12px;height:10px;text-align:center;font-size:10.5px;line-height:10px;color:#5f6368;transform:rotate(-90deg);transform-origin:6px 5px">4</span>
<span class="t" style="left:0px;top:702px;width:12px;height:10px;text-align:center;font-size:10.5px;line-height:10px;color:#5f6368;transform:rotate(-90deg);transform-origin:6px 5px">5</span>
<span class="t" style="left:0px;top:798px;width:12px;height:10px;text-align:center;font-size:10.5px;line-height:10px;color:#5f6368;transform:rotate(-90deg);transform-origin:6px 5px">6</span>
<span class="t" style="left:0px;top:894px;width:12px;height:10px;text-align:center;font-size:10.5px;line-height:10px;color:#5f6368;transform:rotate(-90deg);transform-origin:6px 5px">7</span>
<span class="t" style="left:0px;top:990px;width:12px;height:10px;text-align:center;font-size:10.5px;line-height:10px;color:#5f6368;transform:rotate(-90deg);transform-origin:6px 5px">8</span>
<div id="page"></div>
<div class="d" style="left:731.7px;top:245px;font-size:20px;font-weight:bold;line-height:23px">DIVORCE SETTLEMENT AGREEMENT</div>
<div class="d" style="top:287px">This Divorce Settlement Agreement ("Agreement") is made and entered into by and between</div>
<div class="d" style="top:307px">the following parties:</div>
<div class="d" style="top:342px"><b>Ray Nguyen</b>, residing at Dream Bay, hereinafter referred to as the "Petitioner",</div>
<div class="d" style="top:361px;left:605px">and</div>
<div class="d" style="top:381px;left:605px"><b>Lilia the Succubus</b>, residing at Burning Hell, hereinafter referred to as the "Respondent".</div>
<div class="d" style="top:416px"><b>Date:</b> XII VI IX</div>
<div class="hr" style="top:462px"></div>
<div class="h" style="top:489px">1. BACKGROUND</div>
<div class="d" style="top:529px">The parties were legally married <span style="text-decoration:underline wavy #4285f4 1px;text-underline-offset:2px">on Dragard</span>, in Heaven. Due to irreconcilable differences, both</div>
<div class="d" style="top:548px">parties agree that the marriage has irretrievably broken down and mutually wish to dissolve the</div>
<div class="d" style="top:567px">marriage.</div>
<div class="hr" style="top:613px"></div>
<div class="h" style="top:640px">2. SEPARATION</div>
<div class="d" style="top:680px">The parties have been living separately since [Date of Separation].</div>
<div class="hr" style="top:726px"></div>
<div class="h" style="top:753px">3. CHILDREN</div>
<div class="d" style="top:792px"><span style="font-family:'DejaVu Sans',sans-serif;font-size:14.6px;line-height:1">☐</span> The parties have no children together.</div>
<div class="d" style="top:811px;left:605px"><span style="font-family:'DejaVu Sans',sans-serif;font-size:14.6px;line-height:1">☐</span> The parties have the following children together:</div>
<div class="d" style="top:847px;left:649px">[Full Name], born [DOB]</div>
<div class="d" style="top:886px;left:649px">[Full Name], born [DOB]</div>
<span class="t" style="left:625.7px;top:846.6px;line-height:18px;font-size:9px;color:#000;font-family:'DejaVu Sans',sans-serif">●</span>
<span class="t" style="left:625.7px;top:885.6px;line-height:18px;font-size:9px;color:#000;font-family:'DejaVu Sans',sans-serif">●</span>
<div class="d" style="top:940px">Custody, visitation, and child support arrangements will be as follows:</div>
<div class="d" style="top:960px;left:605px">[Insert agreement on custody/visitation/support or note that these will be handled by the court]</div>
<div class="hr" style="top:1006px"></div>

<!-- scrollbar -->
<div class="abs" style="left:1852px;top:244px;width:8px;height:195px;border-radius:4px;background:#dadce0"></div>
<!-- side panel icons -->
<svg style="left:1882px;top:165px" width="19" height="19" viewBox="0 0 19 19"><rect x="1" y="1" width="17" height="17" rx="1.5" fill="#fff"/><path d="M4.5 0.5 H14.5 V4.5 H4.5Z" fill="#4285f4"/><path d="M0.5 4.5 H4.5 V14.5 H0.5Z" fill="#4285f4"/><path d="M14.5 4.5 H18.5 V14.5 H14.5Z" fill="#fbbc04"/><path d="M4.5 14.5 H14.5 V18.5 H4.5Z" fill="#34a853"/><path d="M0.5 2.5 Q0.5 0.5 2.5 0.5 H4.5 V4.5 H0.5Z" fill="#4285f4"/><path d="M14.5 0.5 H16.5 Q18.5 0.5 18.5 2.5 V4.5 H14.5Z" fill="#1967d2"/><path d="M0.5 14.5 H4.5 V18.5 H2.5 Q0.5 18.5 0.5 16.5Z" fill="#188038"/><path d="M14.5 14.5 H18.5 L14.5 18.5Z" fill="#ea4335"/><rect x="4.5" y="4.5" width="10" height="10" fill="#fff"/><text x="9.5" y="12.6" font-size="7.5" font-weight="bold" text-anchor="middle" fill="#4285f4" font-family="Liberation Sans, sans-serif">31</text></svg>
<svg style="left:1882px;top:220px" width="20" height="20" viewBox="0 0 20 20"><rect x="0.5" y="0.5" width="19" height="19" rx="2" fill="#fbbc04"/><circle cx="10" cy="8.6" r="3.6" fill="#fff"/><rect x="8.2" y="12" width="3.6" height="1.5" fill="#fff"/><rect x="8.6" y="14.2" width="2.8" height="1.1" fill="#fff"/></svg>
<svg style="left:1882px;top:276px" width="20" height="20" viewBox="0 0 20 20"><circle cx="9.6" cy="10.6" r="7" fill="none" stroke="#1a73e8" stroke-width="2.6"/><path d="M6.2 10.4 L9 13 L17 3.4" fill="none" stroke="#1a73e8" stroke-width="2.6" stroke-linecap="round" stroke-linejoin="round"/><circle cx="17" cy="3.6" r="1.3" fill="#1a73e8"/></svg>
<svg style="left:1884px;top:333px" width="16" height="18" viewBox="0 0 16 18"><circle cx="8" cy="4.2" r="3.4" fill="#1a56c4"/><path d="M2 17 V13.4 Q2 9.4 8 9.4 Q14 9.4 14 13.4 V17Z" fill="#1a56c4"/><path d="M0.8 17 V14.6 Q0.8 12.6 3 12.6 H9 V17Z" fill="#8ab4f8" opacity="0.85"/><path d="M3.4 17 V13.4 Q3.6 10 8 9.6 Q12.6 9.8 13.6 12.6 V17Z" fill="#1a56c4" opacity="0.9"/></svg>
<svg style="left:1884px;top:388px" width="16" height="20" viewBox="0 0 16 20"><path d="M8 0.6 Q14.6 0.8 14.8 7.4 Q14.6 11 10.6 15 Q8.8 17 8 19.4 Q7.2 17 5.4 15 Q1.4 11 1.2 7.4 Q1.4 0.8 8 0.6Z" fill="#34a853"/><path d="M8 0.6 Q14.6 0.8 14.8 7.4 Q14.7 9 13.8 10.6 L8 7.4 L3 2.6 Q5 0.7 8 0.6Z" fill="#4285f4"/><path d="M3 2.6 L8 7.4 L2.2 11 Q1.2 9.2 1.2 7.4 Q1.3 4.4 3 2.6Z" fill="#ea4335"/><path d="M2.2 11 L8 7.4 L5.4 15 Q3.2 12.8 2.2 11Z" fill="#fbbc04"/><path d="M8 0.6 Q12 0.7 13.8 3.8 L8 7.4 L3 2.6 Q5 0.7 8 0.6Z" fill="#1a73e8"/><circle cx="8" cy="7.2" r="2.5" fill="#fff"/></svg>
<div class="abs" style="left:1882px;top:442px;width:20px;height:1px;background:#dadce0"></div>
<svg style="left:1885px;top:480px" width="14" height="14" viewBox="0 0 14 14"><path d="M7 0.4 V13.6 M0.4 7 H13.6" stroke="#1f1f1f" stroke-width="1.7" fill="none"/></svg>

<div class="abs" style="left:1302px;top:700px;width:40px;height:130px;border-radius:20px;border:1px solid rgba(120,130,150,.06)"></div>
<svg style="left:1312px;top:716px" width="20" height="20" viewBox="0 0 20 20" opacity="0.55"><path d="M1.5 1.5 H18.500 V14.5 H5.5 L1.5 18.500Z" fill="none" stroke="#c3d3f2" stroke-width="1.6"/><path d="M10 4.600 V11.4 M6.600 8 H13.4" stroke="#c3d3f2" stroke-width="1.6"/></svg>
<svg style="left:1264px;top:737px" width="656" height="294" viewBox="1264 737 656 294">
<defs><linearGradient id="wg" x1="0" y1="0" x2="0" y2="1"><stop offset="0" stop-color="#86b4fb"/><stop offset="0.18" stop-color="#84cdfd"/><stop offset="0.42" stop-color="#82e4fe"/><stop offset="0.8" stop-color="#8af5ff"/><stop offset="1" stop-color="#8af5ff"/></linearGradient><linearGradient id="lid" x1="0" y1="0" x2="1" y2="0"><stop offset="0" stop-color="#2b3557"/><stop offset="0.03" stop-color="#2b3557"/><stop offset="0.05" stop-color="#333f64"/><stop offset="0.11" stop-color="#34406a"/><stop offset="0.13" stop-color="#3e4a70"/><stop offset="0.87" stop-color="#3e4a70"/><stop offset="0.9" stop-color="#333f64"/><stop offset="0.96" stop-color="#2b3557"/><stop offset="1" stop-color="#2b3557"/></linearGradient><radialGradient id="glow"><stop offset="0" stop-color="#b8fbff" stop-opacity="0.75"/><stop offset="1" stop-color="#b8fbff" stop-opacity="0"/></radialGradient><linearGradient id="ray" x1="0" y1="0" x2="0" y2="1"><stop offset="0" stop-color="#c8f4ff" stop-opacity="0.0"/><stop offset="0.5" stop-color="#c8f8ff" stop-opacity="0.28"/><stop offset="1" stop-color="#c8f8ff" stop-opacity="0"/></linearGradient></defs>
<rect x="1264" y="737" width="656" height="293.4" fill="#2a4ba4"/>
<rect x="1267" y="740" width="653" height="29" fill="#222b50"/>
<rect x="1268.5" y="741.5" width="648" height="26" fill="#7f88ac"/>
<rect x="1272" y="745" width="641" height="18.5" fill="url(#lid)"/>
<rect x="1268" y="771" width="648" height="4.5" fill="#4b8fe2"/>
<rect x="1268" y="775" width="648" height="248" fill="#8ae6ff"/>
<rect x="1272" y="775" width="640" height="40" fill="#d9feff"/>
<path d="M1272 812 L1912 812 L1912 1023 L1272 1023Z" fill="url(#wg)"/>
<g transform="translate(0 1)">
<path d="M1272 806 Q1300 806 1330 808 Q1370 812 1400 811 Q1430 809 1460 806.5 Q1500 805 1540 807 Q1580 811 1620 811 Q1660 809 1690 806.5 Q1730 805 1770 807.5 Q1810 811 1850 810.5 Q1885 808 1912 806.5 L1912 818 Q1880 822 1850 819 Q1800 813 1760 817 Q1720 821 1680 817 Q1640 812 1600 817 Q1560 821 1520 816 Q1480 812 1440 817 Q1400 821 1360 817 Q1320 813 1272 819Z" fill="#9fd2ff" opacity="0.6"/>
<path d="M1272 806 Q1300 806 1330 808 Q1370 812 1400 811 Q1430 809 1460 806.5 Q1500 805 1540 807 Q1580 811 1620 811 Q1660 809 1690 806.5 Q1730 805 1770 807.5 Q1810 811 1850 810.5 Q1885 808 1912 806.5" fill="none" stroke="#ffffff" stroke-width="3.8"/>
<path d="M1355 808 Q1400 801 1440 806Z M1560 808 Q1600 802 1650 807Z M1780 808 Q1820 803 1860 807Z" fill="#b4ecff" opacity="0.8"/>
</g>
<rect x="1440" y="820" width="30" height="140" fill="url(#ray)"/>
<rect x="1495" y="830" width="22" height="110" fill="url(#ray)"/>
<rect x="1520" y="840" width="26" height="110" fill="url(#ray)"/>
<rect x="1700" y="830" width="24" height="100" fill="url(#ray)"/>
<ellipse cx="1560" cy="882" rx="34" ry="30" fill="url(#glow)"/>
<ellipse cx="1700" cy="900" rx="40" ry="34" fill="url(#glow)" opacity="0.7"/>
<polygon points="1395.0,985.3 1398.7,942.3 1402.4,910.4 1413.7,904.8 1428.6,903.9 1443.6,914.2 1453.0,923.5 1467.9,927.3 1474.5,942.3 1479.2,961.0 1481.0,985.3" fill="#4f72a6" stroke="#3f5c94" stroke-width="1.2" stroke-linejoin="round"/>
<polygon points="1413.7,910.4 1428.6,906.7 1449.2,924.5 1451.1,949.7 1432.4,961.0 1417.4,946.0" fill="#46689c"/>
<polygon points="1428.6,927.3 1443.6,921.7 1451.1,931.0 1443.6,942.3 1430.5,940.4" fill="#6082b8"/>
<polygon points="1423.0,959.1 1439.9,951.6 1449.2,961.0 1445.5,977.8 1424.9,979.7" fill="#6a84bc"/>
<polygon points="1451.1,964.7 1467.9,934.8 1475.4,949.7 1479.2,985.3 1453.0,985.3" fill="#5a6aa6"/>
<polygon points="1299.5,985.3 1292.1,968.4 1287.4,959.1 1282.7,934.8 1283.6,914.2 1285.0,899.2 1293.9,886.1 1303.3,876.8 1314.5,869.3 1325.7,861.8 1335.1,852.5 1342.6,846.8 1353.8,843.1 1361.3,845.0 1366.0,848.7 1376.3,845.9 1387.5,845.3 1398.7,846.8 1408.1,852.5 1413.7,858.1 1419.3,867.4 1423.0,878.6 1422.1,891.7 1417.4,904.8 1411.8,917.9 1413.7,942.3 1419.3,985.3" fill="#7f87c0" stroke="#6068a4" stroke-width="1.2" stroke-linejoin="round"/>
<polygon points="1325.7,863.7 1342.6,847.8 1353.8,844.0 1366.0,849.6 1376.3,846.8 1387.5,852.5 1383.7,867.4 1368.8,886.1 1351.9,901.1 1331.4,908.6 1316.4,904.8 1310.8,886.1" fill="#8d97d0"/>
<polygon points="1335.1,876.8 1346.3,873.0 1351.9,880.5 1361.3,874.9 1363.2,882.4 1351.9,889.9 1342.6,889.9" fill="#a3aee2"/>
<polygon points="1342.6,865.5 1348.2,863.7 1350.1,868.4 1344.4,870.2" fill="#a3aee2"/>
<polygon points="1292.1,891.7 1308.9,878.6 1316.4,882.4 1307.0,893.6 1297.7,908.6 1288.3,917.9" fill="#949ed6"/>
<polygon points="1314.5,936.6 1335.1,925.4 1346.3,929.2 1344.4,938.5 1325.7,946.9 1316.4,944.1" fill="#949ed6"/>
<polygon points="1387.5,852.5 1408.1,853.4 1419.3,867.4 1423.0,878.6 1422.1,891.7 1413.7,908.6 1411.8,942.3 1419.3,985.3 1368.8,985.3 1361.3,949.7 1351.9,919.8 1361.3,904.8 1376.3,891.7 1385.6,873.0" fill="#6e76b2"/>
<polygon points="1284.6,927.3 1301.4,942.3 1308.9,949.7 1297.7,953.5 1288.3,949.7" fill="#6e76b2"/>
<polygon points="1292.1,968.4 1312.6,972.2 1353.8,977.8 1368.8,985.3 1299.5,985.3" fill="#727ab4"/>
<polygon points="1376.3,891.7 1395.0,886.1 1406.2,908.6 1395.0,934.8 1380.0,934.8 1368.8,917.9" fill="#626aa6"/>
<polygon points="1743.9,981.3 1750.9,964.3 1759.4,953.0 1770.7,933.3 1782.0,916.3 1784.8,902.2 1793.3,890.9 1804.6,883.9 1815.9,881.0 1832.8,882.5 1855.4,881.9 1865.3,888.1 1872.3,893.7 1889.3,903.6 1900.6,913.5 1907.6,924.8 1911.3,936.1 1911.9,981.3" fill="#8e94c2" stroke="#6e74a6" stroke-width="1.2" stroke-linejoin="round"/>
<polygon points="1787.6,899.4 1804.6,884.7 1832.8,883.3 1855.4,882.7 1872.3,894.6 1886.4,903.6 1872.3,910.7 1852.6,905.0 1835.6,913.5 1815.9,899.4 1798.9,910.7" fill="#a2a9d6"/>
<polygon points="1793.3,910.7 1815.9,902.2 1832.8,916.3 1852.6,907.9 1869.5,913.5 1872.3,933.3 1852.6,944.6 1832.8,938.9 1815.9,947.4 1798.9,936.1" fill="#7a80b4"/>
<polygon points="1872.3,910.7 1889.3,905.0 1907.6,924.8 1911.3,938.9 1897.7,950.2 1880.8,938.9" fill="#9aa1d0"/>
<polygon points="1770.7,936.1 1787.6,922.0 1804.6,944.6 1815.9,972.8 1787.6,981.3 1748.1,981.3" fill="#7e86b8"/>
<polygon points="1821.5,953.0 1852.6,947.4 1883.6,944.6 1911.3,955.9 1911.9,981.3 1815.9,981.3" fill="#70769f"/>
<polygon points="1804.6,924.8 1815.9,919.2 1824.3,933.3 1813.0,941.7" fill="#686ea6"/>
<path d="M1359.3 956.2 L1364.4 951.1 L1366.5 963.3 L1373.6 977.6 L1383.8 987.8 L1394.0 995.9 L1382.8 993.9 L1370.5 985.7 L1361.4 971.5Z" fill="#237f93"/>
<path d="M1424.5 941.9 L1426.0 955.2 L1422.5 969.4 L1417.4 979.6 L1411.3 990.8 L1399.1 995.9 L1403.1 986.7 L1413.3 973.5 L1420.4 957.2Z" fill="#2a93a0"/>
<path d="M1365.5 920.5 L1369.5 916.5 L1370.5 935.8 L1375.6 947.0 L1378.7 957.2 L1377.7 971.5 L1373.6 961.3 L1367.5 947.0 L1364.9 932.8Z" fill="#2fa9a0"/>
<path d="M1387.9 899.2 L1388.9 905.3 L1380.7 914.4 L1377.2 923.6 L1377.7 934.8 L1380.7 943.0 L1378.7 947.0 L1372.6 935.8 L1369.5 924.6 L1371.6 912.4 L1378.7 904.3Z" fill="#8fe6a2"/>
<path d="M1378.7 904.3 L1387.9 899.2 L1373.6 913.4 L1370.5 924.6Z" fill="#a6efaa"/>
<path d="M1391.9 910.4 L1401.1 918.5 L1407.2 930.7 L1411.3 940.9 L1410.3 949.1 L1405.2 957.2 L1401.1 969.4 L1398.0 981.6 L1395.0 991.8 L1389.9 987.8 L1393.0 967.4 L1397.0 955.2 L1399.1 943.0 L1398.0 930.7 L1395.0 918.5Z" fill="#98eca0"/>
<path d="M1401.1 969.4 L1405.2 957.2 L1410.3 949.1 L1407.2 963.3 L1403.1 977.6 L1398.0 987.8Z" fill="#3fb98e"/>
<path d="M1395.0 930.7 L1393.0 936.8 L1388.9 947.0 L1385.8 959.2 L1385.8 971.5 L1388.9 981.6 L1393.0 991.8 L1384.8 987.8 L1380.7 979.6 L1377.7 967.4 L1377.7 955.2 L1380.7 944.0 L1386.8 937.9Z" fill="#9aeaa0"/>
<path d="M1377.7 967.4 L1380.7 979.6 L1384.8 987.8 L1393.0 991.8 L1390.9 994.9 L1382.8 989.8 L1377.7 981.6 L1375.6 971.5Z" fill="#46c092"/>
<path d="M1385.8 961.3 L1390.9 965.4 L1393.0 977.6 L1395.0 991.8 L1388.9 981.6 L1385.8 971.5Z" fill="#258a98"/>
<path d="M1397.0 975.5 L1403.1 978.6 L1407.2 984.7 L1401.1 994.9 L1395.0 992.9Z" fill="#23809a"/>
<path d="M1584.1 980.7 Q1593.0 952.6 1581.1 923.0" fill="none" stroke="#5a4668" stroke-width="3.6"/>
<path d="M1586.6 970.7 L1594.8 966.9" stroke="#5a4668" stroke-width="3.2"/>
<path d="M1587.1 967.1 L1580.8 960.7" stroke="#5a4668" stroke-width="3.2"/>
<path d="M1587.9 957.3 L1580.5 952.0" stroke="#5a4668" stroke-width="3.2"/>
<path d="M1587.8 953.7 L1595.3 948.5" stroke="#5a4668" stroke-width="3.2"/>
<path d="M1586.9 943.7 L1593.4 937.4" stroke="#5a4668" stroke-width="3.2"/>
<path d="M1586.2 940.0 L1578.1 936.0" stroke="#5a4668" stroke-width="3.2"/>
<path d="M1583.6 929.9 L1575.0 927.2" stroke="#5a4668" stroke-width="3.2"/>
<path d="M1582.4 926.2 L1587.8 919.0" stroke="#5a4668" stroke-width="3.2"/>
<path d="M1778.1 974.1 Q1774.4 943.7 1780.4 911.1" fill="none" stroke="#64425a" stroke-width="3.6"/>
<path d="M1777.2 964.7 L1784.2 958.9" stroke="#64425a" stroke-width="3.2"/>
<path d="M1777.0 961.6 L1769.3 956.9" stroke="#64425a" stroke-width="3.2"/>
<path d="M1776.7 953.0 L1769.3 947.9" stroke="#64425a" stroke-width="3.2"/>
<path d="M1776.7 949.9 L1784.1 944.6" stroke="#64425a" stroke-width="3.2"/>
<path d="M1776.9 941.3 L1784.6 936.4" stroke="#64425a" stroke-width="3.2"/>
<path d="M1777.1 938.1 L1769.9 932.5" stroke="#64425a" stroke-width="3.2"/>
<path d="M1777.8 929.3 L1770.9 923.4" stroke="#64425a" stroke-width="3.2"/>
<path d="M1778.1 926.1 L1786.0 921.7" stroke="#64425a" stroke-width="3.2"/>
<path d="M1779.3 917.2 L1787.5 913.2" stroke="#64425a" stroke-width="3.2"/>
<path d="M1779.9 914.0 L1773.3 907.7" stroke="#64425a" stroke-width="3.2"/>
<path d="M1649.3 980.7 Q1655.2 955.6 1647.0 930.4" fill="none" stroke="#554a6c" stroke-width="3.6"/>
<path d="M1650.9 971.8 L1659.0 967.6" stroke="#554a6c" stroke-width="3.2"/>
<path d="M1651.3 968.7 L1644.7 962.5" stroke="#554a6c" stroke-width="3.2"/>
<path d="M1651.8 960.0 L1644.4 954.7" stroke="#554a6c" stroke-width="3.2"/>
<path d="M1651.7 956.8 L1659.1 951.6" stroke="#554a6c" stroke-width="3.2"/>
<path d="M1651.0 948.1 L1657.7 942.0" stroke="#554a6c" stroke-width="3.2"/>
<path d="M1650.6 945.0 L1642.6 940.7" stroke="#554a6c" stroke-width="3.2"/>
<path d="M1648.8 936.3 L1640.3 933.1" stroke="#554a6c" stroke-width="3.2"/>
<path d="M1647.9 933.1 L1653.8 926.2" stroke="#554a6c" stroke-width="3.2"/>
<path d="M1723.3 979.3 Q1729.3 957.0 1721.1 930.4" fill="none" stroke="#5e4060" stroke-width="3.6"/>
<path d="M1725.2 969.4 L1733.2 965.1" stroke="#5e4060" stroke-width="3.2"/>
<path d="M1725.6 965.5 L1718.9 959.4" stroke="#5e4060" stroke-width="3.2"/>
<path d="M1725.7 954.5 L1717.9 949.7" stroke="#5e4060" stroke-width="3.2"/>
<path d="M1725.3 950.3 L1732.4 944.7" stroke="#5e4060" stroke-width="3.2"/>
<path d="M1723.3 938.6 L1729.4 931.9" stroke="#5e4060" stroke-width="3.2"/>
<path d="M1722.2 934.3 L1713.8 930.8" stroke="#5e4060" stroke-width="3.2"/>
<path d="M1607.8 983.0 Q1616.7 967.4 1609.3 924.4" fill="none" stroke="#874468" stroke-width="3.6"/>
<path d="M1610.4 976.6 L1619.0 973.7" stroke="#874468" stroke-width="3.2"/>
<path d="M1611.1 973.9 L1605.5 966.8" stroke="#874468" stroke-width="3.2"/>
<path d="M1612.3 965.5 L1605.4 959.7" stroke="#874468" stroke-width="3.2"/>
<path d="M1612.5 962.0 L1620.4 957.4" stroke="#874468" stroke-width="3.2"/>
<path d="M1612.5 951.3 L1619.6 945.7" stroke="#874468" stroke-width="3.2"/>
<path d="M1612.2 947.1 L1604.5 942.2" stroke="#874468" stroke-width="3.2"/>
<path d="M1610.8 934.2 L1602.7 930.0" stroke="#874468" stroke-width="3.2"/>
<path d="M1610.0 929.1 L1616.6 922.9" stroke="#874468" stroke-width="3.2"/>
<path d="M1624.8 983.0 Q1612.2 934.8 1638.9 868.9" fill="none" stroke="#874468" stroke-width="3.8"/>
<path d="M1622.5 971.9 L1629.0 965.6" stroke="#874468" stroke-width="3.2"/>
<path d="M1622.1 969.1 L1613.9 965.2" stroke="#874468" stroke-width="3.2"/>
<path d="M1621.2 961.3 L1613.4 956.6" stroke="#874468" stroke-width="3.2"/>
<path d="M1621.0 958.4 L1628.0 952.6" stroke="#874468" stroke-width="3.2"/>
<path d="M1620.8 950.2 L1628.2 945.0" stroke="#874468" stroke-width="3.2"/>
<path d="M1620.8 947.2 L1613.4 942.0" stroke="#874468" stroke-width="3.2"/>
<path d="M1621.2 938.8 L1614.2 933.0" stroke="#874468" stroke-width="3.2"/>
<path d="M1621.5 935.7 L1629.2 931.0" stroke="#874468" stroke-width="3.2"/>
<path d="M1622.5 926.9 L1630.6 922.8" stroke="#874468" stroke-width="3.2"/>
<path d="M1623.0 923.7 L1616.4 917.5" stroke="#874468" stroke-width="3.2"/>
<path d="M1624.6 914.7 L1618.4 908.1" stroke="#874468" stroke-width="3.2"/>
<path d="M1625.4 911.4 L1633.7 907.8" stroke="#874468" stroke-width="3.2"/>
<path d="M1627.6 902.1 L1636.1 899.0" stroke="#874468" stroke-width="3.2"/>
<path d="M1628.6 898.7 L1622.8 891.7" stroke="#874468" stroke-width="3.2"/>
<path d="M1631.5 889.1 L1626.1 881.9" stroke="#874468" stroke-width="3.2"/>
<path d="M1632.7 885.6 L1641.3 882.9" stroke="#874468" stroke-width="3.2"/>
<path d="M1636.2 875.7 L1645.0 873.5" stroke="#874468" stroke-width="3.2"/>
<path d="M1637.6 872.1 L1632.5 864.6" stroke="#874468" stroke-width="3.2"/>
<path d="M1673.0 981.5 Q1664.1 937.8 1680.4 902.2" fill="none" stroke="#8a4266" stroke-width="3.8"/>
<path d="M1671.0 969.5 L1677.7 963.4" stroke="#8a4266" stroke-width="3.2"/>
<path d="M1670.6 966.0 L1662.6 961.8" stroke="#8a4266" stroke-width="3.2"/>
<path d="M1669.9 956.4 L1662.3 951.4" stroke="#8a4266" stroke-width="3.2"/>
<path d="M1669.8 953.0 L1677.1 947.5" stroke="#8a4266" stroke-width="3.2"/>
<path d="M1670.1 943.7 L1677.8 938.9" stroke="#8a4266" stroke-width="3.2"/>
<path d="M1670.3 940.3 L1663.3 934.7" stroke="#8a4266" stroke-width="3.2"/>
<path d="M1671.5 931.3 L1665.0 925.0" stroke="#8a4266" stroke-width="3.2"/>
<path d="M1672.0 928.1 L1680.2 924.2" stroke="#8a4266" stroke-width="3.2"/>
<path d="M1674.1 919.4 L1682.6 916.3" stroke="#8a4266" stroke-width="3.2"/>
<path d="M1675.0 916.3 L1669.3 909.3" stroke="#8a4266" stroke-width="3.2"/>
<path d="M1678.0 907.8 L1673.0 900.3" stroke="#8a4266" stroke-width="3.2"/>
<path d="M1679.2 904.8 L1688.0 902.7" stroke="#8a4266" stroke-width="3.2"/>
<path d="M1698.9 979.3 Q1708.5 943.7 1698.1 910.4" fill="none" stroke="#8a4266" stroke-width="3.8"/>
<path d="M1701.4 968.4 L1709.6 964.6" stroke="#8a4266" stroke-width="3.2"/>
<path d="M1702.0 964.8 L1695.7 958.4" stroke="#8a4266" stroke-width="3.2"/>
<path d="M1703.1 955.2 L1696.2 949.4" stroke="#8a4266" stroke-width="3.2"/>
<path d="M1703.4 951.7 L1711.2 947.1" stroke="#8a4266" stroke-width="3.2"/>
<path d="M1703.5 942.2 L1710.7 936.8" stroke="#8a4266" stroke-width="3.2"/>
<path d="M1703.3 938.8 L1695.8 933.7" stroke="#8a4266" stroke-width="3.2"/>
<path d="M1702.4 929.3 L1694.3 925.2" stroke="#8a4266" stroke-width="3.2"/>
<path d="M1701.9 926.0 L1708.5 919.8" stroke="#8a4266" stroke-width="3.2"/>
<path d="M1699.9 916.7 L1705.8 909.8" stroke="#8a4266" stroke-width="3.2"/>
<path d="M1699.0 913.3 L1690.6 910.1" stroke="#8a4266" stroke-width="3.2"/>
<path d="M1747.0 984.4 Q1757.4 923.0 1712.2 868.9" fill="none" stroke="#8a4266" stroke-width="4"/>
<path d="M1748.7 970.7 L1756.4 966.0" stroke="#8a4266" stroke-width="3.2"/>
<path d="M1748.9 967.4 L1741.8 961.7" stroke="#8a4266" stroke-width="3.2"/>
<path d="M1748.9 958.2 L1741.4 953.1" stroke="#8a4266" stroke-width="3.2"/>
<path d="M1748.8 954.8 L1756.0 949.4" stroke="#8a4266" stroke-width="3.2"/>
<path d="M1748.0 945.7 L1754.7 939.6" stroke="#8a4266" stroke-width="3.2"/>
<path d="M1747.5 942.4 L1739.5 938.2" stroke="#8a4266" stroke-width="3.2"/>
<path d="M1745.8 933.5 L1737.4 930.0" stroke="#8a4266" stroke-width="3.2"/>
<path d="M1745.0 930.2 L1751.1 923.5" stroke="#8a4266" stroke-width="3.2"/>
<path d="M1742.4 921.4 L1747.8 914.1" stroke="#8a4266" stroke-width="3.2"/>
<path d="M1741.3 918.2 L1732.6 915.5" stroke="#8a4266" stroke-width="3.2"/>
<path d="M1737.8 909.4 L1728.9 907.6" stroke="#8a4266" stroke-width="3.2"/>
<path d="M1736.4 906.3 L1741.1 898.5" stroke="#8a4266" stroke-width="3.2"/>
<path d="M1732.0 897.6 L1736.0 889.5" stroke="#8a4266" stroke-width="3.2"/>
<path d="M1730.3 894.5 L1721.3 893.5" stroke="#8a4266" stroke-width="3.2"/>
<path d="M1725.0 886.0 L1716.0 885.7" stroke="#8a4266" stroke-width="3.2"/>
<path d="M1722.9 883.0 L1726.3 874.5" stroke="#8a4266" stroke-width="3.2"/>
<path d="M1716.8 874.6 L1719.4 865.9" stroke="#8a4266" stroke-width="3.2"/>
<path d="M1714.4 871.5 L1705.3 872.0" stroke="#8a4266" stroke-width="3.2"/>
<path d="M1686.3 981.5 Q1689.3 970.4 1684.8 943.7" fill="none" stroke="#7a3e60" stroke-width="3.4"/>
<path d="M1687.2 975.9 L1695.1 971.4" stroke="#7a3e60" stroke-width="3.2"/>
<path d="M1687.4 973.4 L1680.5 967.5" stroke="#7a3e60" stroke-width="3.2"/>
<path d="M1687.4 965.3 L1679.7 960.5" stroke="#7a3e60" stroke-width="3.2"/>
<path d="M1687.1 962.0 L1694.3 956.4" stroke="#7a3e60" stroke-width="3.2"/>
<path d="M1686.0 951.7 L1692.7 945.5" stroke="#7a3e60" stroke-width="3.2"/>
<path d="M1685.4 947.5 L1677.4 943.3" stroke="#7a3e60" stroke-width="3.2"/>
<path d="M1764.8 981.5 Q1760.4 970.4 1767.0 930.4" fill="none" stroke="#8a4266" stroke-width="3.6"/>
<path d="M1763.6 976.6 L1770.1 970.3" stroke="#8a4266" stroke-width="3.2"/>
<path d="M1763.3 974.5 L1755.2 970.4" stroke="#8a4266" stroke-width="3.2"/>
<path d="M1763.0 967.4 L1755.7 962.1" stroke="#8a4266" stroke-width="3.2"/>
<path d="M1763.1 964.4 L1770.5 959.2" stroke="#8a4266" stroke-width="3.2"/>
<path d="M1763.7 955.0 L1771.6 950.5" stroke="#8a4266" stroke-width="3.2"/>
<path d="M1764.1 951.1 L1757.2 945.3" stroke="#8a4266" stroke-width="3.2"/>
<path d="M1765.6 939.4 L1759.0 933.1" stroke="#8a4266" stroke-width="3.2"/>
<path d="M1766.3 934.7 L1774.4 930.6" stroke="#8a4266" stroke-width="3.2"/>
<path d="M1736.7 981.5 Q1730.7 973.3 1735.9 952.6" fill="none" stroke="#7a3e60" stroke-width="3.4"/>
<path d="M1734.1 975.6 L1740.2 968.9" stroke="#7a3e60" stroke-width="3.2"/>
<path d="M1733.6 972.4 L1725.3 968.9" stroke="#7a3e60" stroke-width="3.2"/>
<path d="M1734.1 961.6 L1727.5 955.4" stroke="#7a3e60" stroke-width="3.2"/>
<path d="M1734.9 957.0 L1743.0 952.9" stroke="#7a3e60" stroke-width="3.2"/>
<ellipse cx="1596.9" cy="965.9" rx="5" ry="2.9" fill="#5a4a6c" transform="rotate(-25 1596.9 965.9)"/>
<ellipse cx="1579.2" cy="959.1" rx="5" ry="2.9" fill="#5a4a6c" transform="rotate(-134 1579.2 959.1)"/>
<ellipse cx="1578.7" cy="950.6" rx="5" ry="2.9" fill="#5a4a6c" transform="rotate(-144 1578.7 950.6)"/>
<ellipse cx="1597.2" cy="947.2" rx="5" ry="2.9" fill="#5a4a6c" transform="rotate(-35 1597.2 947.2)"/>
<ellipse cx="1595.0" cy="935.8" rx="5" ry="2.9" fill="#5a4a6c" transform="rotate(-44 1595.0 935.8)"/>
<ellipse cx="1576.1" cy="935.0" rx="5" ry="2.9" fill="#5a4a6c" transform="rotate(-154 1576.1 935.0)"/>
<ellipse cx="1572.8" cy="926.5" rx="5" ry="2.9" fill="#5a4a6c" transform="rotate(-163 1572.8 926.5)"/>
<ellipse cx="1589.2" cy="917.2" rx="5" ry="2.9" fill="#5a4a6c" transform="rotate(-53 1589.2 917.2)"/>
<ellipse cx="1581.1" cy="922.0" rx="5" ry="2.9" fill="#5a4a6c" transform="rotate(-90 1581.1 922.0)"/>
<ellipse cx="1786.0" cy="957.5" rx="5" ry="2.9" fill="#5a4a6c" transform="rotate(-39 1786.0 957.5)"/>
<ellipse cx="1767.3" cy="955.7" rx="5" ry="2.9" fill="#5a4a6c" transform="rotate(-149 1767.3 955.7)"/>
<ellipse cx="1767.4" cy="946.6" rx="5" ry="2.9" fill="#5a4a6c" transform="rotate(-146 1767.4 946.6)"/>
<ellipse cx="1785.9" cy="943.3" rx="5" ry="2.9" fill="#5a4a6c" transform="rotate(-36 1785.9 943.3)"/>
<ellipse cx="1786.5" cy="935.1" rx="5" ry="2.9" fill="#5a4a6c" transform="rotate(-33 1786.5 935.1)"/>
<ellipse cx="1768.1" cy="931.2" rx="5" ry="2.9" fill="#5a4a6c" transform="rotate(-142 1768.1 931.2)"/>
<ellipse cx="1769.2" cy="921.9" rx="5" ry="2.9" fill="#5a4a6c" transform="rotate(-139 1769.2 921.9)"/>
<ellipse cx="1788.0" cy="920.5" rx="5" ry="2.9" fill="#5a4a6c" transform="rotate(-29 1788.0 920.5)"/>
<ellipse cx="1789.5" cy="912.2" rx="5" ry="2.9" fill="#5a4a6c" transform="rotate(-26 1789.5 912.2)"/>
<ellipse cx="1771.7" cy="906.1" rx="5" ry="2.9" fill="#5a4a6c" transform="rotate(-136 1771.7 906.1)"/>
<ellipse cx="1780.4" cy="910.1" rx="5" ry="2.9" fill="#5a4a6c" transform="rotate(-90 1780.4 910.1)"/>
<ellipse cx="1661.0" cy="966.6" rx="5" ry="2.9" fill="#5a4a6c" transform="rotate(-27 1661.0 966.6)"/>
<ellipse cx="1643.0" cy="960.9" rx="5" ry="2.9" fill="#5a4a6c" transform="rotate(-137 1643.0 960.9)"/>
<ellipse cx="1642.5" cy="953.4" rx="5" ry="2.9" fill="#5a4a6c" transform="rotate(-145 1642.5 953.4)"/>
<ellipse cx="1661.0" cy="950.3" rx="5" ry="2.9" fill="#5a4a6c" transform="rotate(-35 1661.0 950.3)"/>
<ellipse cx="1659.4" cy="940.5" rx="5" ry="2.9" fill="#5a4a6c" transform="rotate(-42 1659.4 940.5)"/>
<ellipse cx="1640.6" cy="939.7" rx="5" ry="2.9" fill="#5a4a6c" transform="rotate(-152 1640.6 939.7)"/>
<ellipse cx="1638.2" cy="932.3" rx="5" ry="2.9" fill="#5a4a6c" transform="rotate(-159 1638.2 932.3)"/>
<ellipse cx="1655.2" cy="924.5" rx="5" ry="2.9" fill="#5a4a6c" transform="rotate(-50 1655.2 924.5)"/>
<ellipse cx="1647.0" cy="929.4" rx="5" ry="2.9" fill="#5a4a6c" transform="rotate(-90 1647.0 929.4)"/>
<ellipse cx="1735.2" cy="964.1" rx="5" ry="2.9" fill="#5a4a6c" transform="rotate(-28 1735.2 964.1)"/>
<ellipse cx="1717.2" cy="957.9" rx="5" ry="2.9" fill="#5a4a6c" transform="rotate(-138 1717.2 957.9)"/>
<ellipse cx="1716.0" cy="948.5" rx="5" ry="2.9" fill="#5a4a6c" transform="rotate(-148 1716.0 948.5)"/>
<ellipse cx="1734.1" cy="943.2" rx="5" ry="2.9" fill="#5a4a6c" transform="rotate(-39 1734.1 943.2)"/>
<ellipse cx="1730.9" cy="930.2" rx="5" ry="2.9" fill="#5a4a6c" transform="rotate(-48 1730.9 930.2)"/>
<ellipse cx="1711.7" cy="930.0" rx="5" ry="2.9" fill="#5a4a6c" transform="rotate(-158 1711.7 930.0)"/>
<ellipse cx="1721.1" cy="929.4" rx="5" ry="2.9" fill="#5a4a6c" transform="rotate(-90 1721.1 929.4)"/>
<ellipse cx="1621.1" cy="974.0" rx="6.4" ry="4.3" fill="#bf6cb8" transform="rotate(-19 1621.1 974.0)"/>
<ellipse cx="1621.1" cy="972.4" rx="6" ry="3.5" fill="#ea98e2" transform="rotate(-19 1621.1 972.4)"/>
<ellipse cx="1604.1" cy="966.1" rx="6.4" ry="4.3" fill="#bf6cb8" transform="rotate(-128 1604.1 966.1)"/>
<ellipse cx="1604.1" cy="964.5" rx="6" ry="3.5" fill="#ea98e2" transform="rotate(-128 1604.1 964.5)"/>
<ellipse cx="1603.6" cy="959.3" rx="6.4" ry="4.3" fill="#bf6cb8" transform="rotate(-140 1603.6 959.3)"/>
<ellipse cx="1603.6" cy="957.7" rx="6" ry="3.5" fill="#ea98e2" transform="rotate(-140 1603.6 957.7)"/>
<ellipse cx="1622.3" cy="957.3" rx="6.4" ry="4.3" fill="#bf6cb8" transform="rotate(-31 1622.3 957.3)"/>
<ellipse cx="1622.3" cy="955.7" rx="6" ry="3.5" fill="#ea98e2" transform="rotate(-31 1622.3 955.7)"/>
<ellipse cx="1621.4" cy="945.4" rx="6.4" ry="4.3" fill="#bf6cb8" transform="rotate(-38 1621.4 945.4)"/>
<ellipse cx="1621.4" cy="943.8" rx="6" ry="3.5" fill="#ea98e2" transform="rotate(-38 1621.4 943.8)"/>
<ellipse cx="1602.6" cy="942.1" rx="6.4" ry="4.3" fill="#bf6cb8" transform="rotate(-148 1602.6 942.1)"/>
<ellipse cx="1602.6" cy="940.5" rx="6" ry="3.5" fill="#ea98e2" transform="rotate(-148 1602.6 940.5)"/>
<ellipse cx="1600.7" cy="930.1" rx="6.4" ry="4.3" fill="#bf6cb8" transform="rotate(-153 1600.7 930.1)"/>
<ellipse cx="1600.7" cy="928.5" rx="6" ry="3.5" fill="#ea98e2" transform="rotate(-153 1600.7 928.5)"/>
<ellipse cx="1618.3" cy="921.3" rx="5" ry="2.9" fill="#5a4a6c" transform="rotate(-43 1618.3 921.3)"/>
<ellipse cx="1609.3" cy="924.5" rx="6.4" ry="4.3" fill="#bf6cb8" transform="rotate(-90 1609.3 924.5)"/>
<ellipse cx="1609.3" cy="922.9" rx="6" ry="3.5" fill="#ea98e2" transform="rotate(-90 1609.3 922.9)"/>
<ellipse cx="1630.6" cy="965.1" rx="6.4" ry="4.3" fill="#bf6cb8" transform="rotate(-44 1630.6 965.1)"/>
<ellipse cx="1630.6" cy="963.5" rx="6" ry="3.5" fill="#ea98e2" transform="rotate(-44 1630.6 963.5)"/>
<ellipse cx="1611.9" cy="965.3" rx="6.4" ry="4.3" fill="#bf6cb8" transform="rotate(-154 1611.9 965.3)"/>
<ellipse cx="1611.9" cy="963.7" rx="6" ry="3.5" fill="#ea98e2" transform="rotate(-154 1611.9 963.7)"/>
<ellipse cx="1611.5" cy="956.6" rx="6.4" ry="4.3" fill="#bf6cb8" transform="rotate(-149 1611.5 956.6)"/>
<ellipse cx="1611.5" cy="955.0" rx="6" ry="3.5" fill="#ea98e2" transform="rotate(-149 1611.5 955.0)"/>
<ellipse cx="1629.7" cy="952.2" rx="6.4" ry="4.3" fill="#bf6cb8" transform="rotate(-40 1629.7 952.2)"/>
<ellipse cx="1629.7" cy="950.6" rx="6" ry="3.5" fill="#ea98e2" transform="rotate(-40 1629.7 950.6)"/>
<ellipse cx="1630.0" cy="943.7" rx="5" ry="2.9" fill="#5a4a6c" transform="rotate(-35 1630.0 943.7)"/>
<ellipse cx="1611.5" cy="941.8" rx="6.4" ry="4.3" fill="#bf6cb8" transform="rotate(-145 1611.5 941.8)"/>
<ellipse cx="1611.5" cy="940.2" rx="6" ry="3.5" fill="#ea98e2" transform="rotate(-145 1611.5 940.2)"/>
<ellipse cx="1612.5" cy="932.7" rx="6.4" ry="4.3" fill="#bf6cb8" transform="rotate(-141 1612.5 932.7)"/>
<ellipse cx="1612.5" cy="931.1" rx="6" ry="3.5" fill="#ea98e2" transform="rotate(-141 1612.5 931.1)"/>
<ellipse cx="1631.2" cy="930.9" rx="6.4" ry="4.3" fill="#bf6cb8" transform="rotate(-31 1631.2 930.9)"/>
<ellipse cx="1631.2" cy="929.3" rx="6" ry="3.5" fill="#ea98e2" transform="rotate(-31 1631.2 929.3)"/>
<ellipse cx="1632.6" cy="922.9" rx="6.4" ry="4.3" fill="#bf6cb8" transform="rotate(-27 1632.6 922.9)"/>
<ellipse cx="1632.6" cy="921.3" rx="6" ry="3.5" fill="#ea98e2" transform="rotate(-27 1632.6 921.3)"/>
<ellipse cx="1614.7" cy="917.0" rx="6.4" ry="4.3" fill="#bf6cb8" transform="rotate(-137 1614.7 917.0)"/>
<ellipse cx="1614.7" cy="915.4" rx="6" ry="3.5" fill="#ea98e2" transform="rotate(-137 1614.7 915.4)"/>
<ellipse cx="1616.9" cy="907.5" rx="6.4" ry="4.3" fill="#bf6cb8" transform="rotate(-133 1616.9 907.5)"/>
<ellipse cx="1616.9" cy="905.9" rx="6" ry="3.5" fill="#ea98e2" transform="rotate(-133 1616.9 905.9)"/>
<ellipse cx="1635.7" cy="908.0" rx="6.4" ry="4.3" fill="#bf6cb8" transform="rotate(-23 1635.7 908.0)"/>
<ellipse cx="1635.7" cy="906.4" rx="6" ry="3.5" fill="#ea98e2" transform="rotate(-23 1635.7 906.4)"/>
<ellipse cx="1638.3" cy="898.2" rx="5" ry="2.9" fill="#5a4a6c" transform="rotate(-20 1638.3 898.2)"/>
<ellipse cx="1621.3" cy="891.1" rx="6.4" ry="4.3" fill="#bf6cb8" transform="rotate(-130 1621.3 891.1)"/>
<ellipse cx="1621.3" cy="889.5" rx="6" ry="3.5" fill="#ea98e2" transform="rotate(-130 1621.3 889.5)"/>
<ellipse cx="1624.7" cy="881.1" rx="6.4" ry="4.3" fill="#bf6cb8" transform="rotate(-127 1624.7 881.1)"/>
<ellipse cx="1624.7" cy="879.5" rx="6" ry="3.5" fill="#ea98e2" transform="rotate(-127 1624.7 879.5)"/>
<ellipse cx="1643.5" cy="883.3" rx="6.4" ry="4.3" fill="#bf6cb8" transform="rotate(-17 1643.5 883.3)"/>
<ellipse cx="1643.5" cy="881.7" rx="6" ry="3.5" fill="#ea98e2" transform="rotate(-17 1643.5 881.7)"/>
<ellipse cx="1647.2" cy="874.0" rx="6.4" ry="4.3" fill="#bf6cb8" transform="rotate(-14 1647.2 874.0)"/>
<ellipse cx="1647.2" cy="872.4" rx="6" ry="3.5" fill="#ea98e2" transform="rotate(-14 1647.2 872.4)"/>
<ellipse cx="1631.3" cy="863.8" rx="6.4" ry="4.3" fill="#bf6cb8" transform="rotate(-124 1631.3 863.8)"/>
<ellipse cx="1631.3" cy="862.2" rx="6" ry="3.5" fill="#ea98e2" transform="rotate(-124 1631.3 862.2)"/>
<ellipse cx="1638.9" cy="869.0" rx="6.4" ry="4.3" fill="#bf6cb8" transform="rotate(-90 1638.9 869.0)"/>
<ellipse cx="1638.9" cy="867.4" rx="6" ry="3.5" fill="#ea98e2" transform="rotate(-90 1638.9 867.4)"/>
<ellipse cx="1679.4" cy="963.0" rx="6.4" ry="4.3" fill="#bf6cb8" transform="rotate(-42 1679.4 963.0)"/>
<ellipse cx="1679.4" cy="961.4" rx="6" ry="3.5" fill="#ea98e2" transform="rotate(-42 1679.4 961.4)"/>
<ellipse cx="1660.6" cy="961.8" rx="6.4" ry="4.3" fill="#bf6cb8" transform="rotate(-152 1660.6 961.8)"/>
<ellipse cx="1660.6" cy="960.2" rx="6" ry="3.5" fill="#ea98e2" transform="rotate(-152 1660.6 960.2)"/>
<ellipse cx="1660.4" cy="951.3" rx="6.4" ry="4.3" fill="#bf6cb8" transform="rotate(-147 1660.4 951.3)"/>
<ellipse cx="1660.4" cy="949.7" rx="6" ry="3.5" fill="#ea98e2" transform="rotate(-147 1660.4 949.7)"/>
<ellipse cx="1678.9" cy="946.1" rx="5" ry="2.9" fill="#5a4a6c" transform="rotate(-37 1678.9 946.1)"/>
<ellipse cx="1679.7" cy="938.8" rx="6.4" ry="4.3" fill="#bf6cb8" transform="rotate(-32 1679.7 938.8)"/>
<ellipse cx="1679.7" cy="937.2" rx="6" ry="3.5" fill="#ea98e2" transform="rotate(-32 1679.7 937.2)"/>
<ellipse cx="1661.5" cy="934.4" rx="6.4" ry="4.3" fill="#bf6cb8" transform="rotate(-141 1661.5 934.4)"/>
<ellipse cx="1661.5" cy="932.8" rx="6" ry="3.5" fill="#ea98e2" transform="rotate(-141 1661.5 932.8)"/>
<ellipse cx="1663.4" cy="924.5" rx="6.4" ry="4.3" fill="#bf6cb8" transform="rotate(-135 1663.4 924.5)"/>
<ellipse cx="1663.4" cy="922.9" rx="6" ry="3.5" fill="#ea98e2" transform="rotate(-135 1663.4 922.9)"/>
<ellipse cx="1682.3" cy="924.3" rx="6.4" ry="4.3" fill="#bf6cb8" transform="rotate(-26 1682.3 924.3)"/>
<ellipse cx="1682.3" cy="922.7" rx="6" ry="3.5" fill="#ea98e2" transform="rotate(-26 1682.3 922.7)"/>
<ellipse cx="1684.8" cy="916.7" rx="6.4" ry="4.3" fill="#bf6cb8" transform="rotate(-20 1684.8 916.7)"/>
<ellipse cx="1684.8" cy="915.1" rx="6" ry="3.5" fill="#ea98e2" transform="rotate(-20 1684.8 915.1)"/>
<ellipse cx="1667.8" cy="908.6" rx="6.4" ry="4.3" fill="#bf6cb8" transform="rotate(-129 1667.8 908.6)"/>
<ellipse cx="1667.8" cy="907.0" rx="6" ry="3.5" fill="#ea98e2" transform="rotate(-129 1667.8 907.0)"/>
<ellipse cx="1671.8" cy="899.5" rx="6.4" ry="4.3" fill="#bf6cb8" transform="rotate(-123 1671.8 899.5)"/>
<ellipse cx="1671.8" cy="897.9" rx="6" ry="3.5" fill="#ea98e2" transform="rotate(-123 1671.8 897.9)"/>
<ellipse cx="1690.2" cy="902.2" rx="5" ry="2.9" fill="#5a4a6c" transform="rotate(-14 1690.2 902.2)"/>
<ellipse cx="1680.4" cy="902.3" rx="6.4" ry="4.3" fill="#bf6cb8" transform="rotate(-90 1680.4 902.3)"/>
<ellipse cx="1680.4" cy="900.7" rx="6" ry="3.5" fill="#ea98e2" transform="rotate(-90 1680.4 900.7)"/>
<ellipse cx="1711.7" cy="963.6" rx="5" ry="2.9" fill="#5a4a6c" transform="rotate(-25 1711.7 963.6)"/>
<ellipse cx="1694.1" cy="957.8" rx="6.4" ry="4.3" fill="#bf6cb8" transform="rotate(-134 1694.1 957.8)"/>
<ellipse cx="1694.1" cy="956.2" rx="6" ry="3.5" fill="#ea98e2" transform="rotate(-134 1694.1 956.2)"/>
<ellipse cx="1694.4" cy="949.0" rx="6.4" ry="4.3" fill="#bf6cb8" transform="rotate(-140 1694.4 949.0)"/>
<ellipse cx="1694.4" cy="947.4" rx="6" ry="3.5" fill="#ea98e2" transform="rotate(-140 1694.4 947.4)"/>
<ellipse cx="1713.1" cy="947.1" rx="6.4" ry="4.3" fill="#bf6cb8" transform="rotate(-31 1713.1 947.1)"/>
<ellipse cx="1713.1" cy="945.5" rx="6" ry="3.5" fill="#ea98e2" transform="rotate(-31 1713.1 945.5)"/>
<ellipse cx="1712.6" cy="936.5" rx="6.4" ry="4.3" fill="#bf6cb8" transform="rotate(-37 1712.6 936.5)"/>
<ellipse cx="1712.6" cy="934.9" rx="6" ry="3.5" fill="#ea98e2" transform="rotate(-37 1712.6 934.9)"/>
<ellipse cx="1693.9" cy="933.6" rx="6.4" ry="4.3" fill="#bf6cb8" transform="rotate(-146 1693.9 933.6)"/>
<ellipse cx="1693.9" cy="932.0" rx="6" ry="3.5" fill="#ea98e2" transform="rotate(-146 1693.9 932.0)"/>
<ellipse cx="1692.3" cy="925.3" rx="6.4" ry="4.3" fill="#bf6cb8" transform="rotate(-153 1692.3 925.3)"/>
<ellipse cx="1692.3" cy="923.7" rx="6" ry="3.5" fill="#ea98e2" transform="rotate(-153 1692.3 923.7)"/>
<ellipse cx="1710.2" cy="919.3" rx="6.4" ry="4.3" fill="#bf6cb8" transform="rotate(-43 1710.2 919.3)"/>
<ellipse cx="1710.2" cy="917.7" rx="6" ry="3.5" fill="#ea98e2" transform="rotate(-43 1710.2 917.7)"/>
<ellipse cx="1707.3" cy="908.1" rx="5" ry="2.9" fill="#5a4a6c" transform="rotate(-49 1707.3 908.1)"/>
<ellipse cx="1688.4" cy="910.3" rx="6.4" ry="4.3" fill="#bf6cb8" transform="rotate(-159 1688.4 910.3)"/>
<ellipse cx="1688.4" cy="908.7" rx="6" ry="3.5" fill="#ea98e2" transform="rotate(-159 1688.4 908.7)"/>
<ellipse cx="1698.1" cy="910.5" rx="6.4" ry="4.3" fill="#bf6cb8" transform="rotate(-90 1698.1 910.5)"/>
<ellipse cx="1698.1" cy="908.9" rx="6" ry="3.5" fill="#ea98e2" transform="rotate(-90 1698.1 908.9)"/>
<ellipse cx="1758.4" cy="966.0" rx="6.4" ry="4.3" fill="#bf6cb8" transform="rotate(-31 1758.4 966.0)"/>
<ellipse cx="1758.4" cy="964.4" rx="6" ry="3.5" fill="#ea98e2" transform="rotate(-31 1758.4 964.4)"/>
<ellipse cx="1740.1" cy="961.3" rx="6.4" ry="4.3" fill="#bf6cb8" transform="rotate(-141 1740.1 961.3)"/>
<ellipse cx="1740.1" cy="959.7" rx="6" ry="3.5" fill="#ea98e2" transform="rotate(-141 1740.1 959.7)"/>
<ellipse cx="1739.5" cy="953.0" rx="6.4" ry="4.3" fill="#bf6cb8" transform="rotate(-146 1739.5 953.0)"/>
<ellipse cx="1739.5" cy="951.4" rx="6" ry="3.5" fill="#ea98e2" transform="rotate(-146 1739.5 951.4)"/>
<ellipse cx="1757.9" cy="949.1" rx="6.4" ry="4.3" fill="#bf6cb8" transform="rotate(-37 1757.9 949.1)"/>
<ellipse cx="1757.9" cy="947.5" rx="6" ry="3.5" fill="#ea98e2" transform="rotate(-37 1757.9 947.5)"/>
<ellipse cx="1756.3" cy="939.2" rx="6.4" ry="4.3" fill="#bf6cb8" transform="rotate(-42 1756.3 939.2)"/>
<ellipse cx="1756.3" cy="937.6" rx="6" ry="3.5" fill="#ea98e2" transform="rotate(-42 1756.3 937.6)"/>
<ellipse cx="1737.5" cy="938.2" rx="6.4" ry="4.3" fill="#bf6cb8" transform="rotate(-152 1737.5 938.2)"/>
<ellipse cx="1737.5" cy="936.6" rx="6" ry="3.5" fill="#ea98e2" transform="rotate(-152 1737.5 936.6)"/>
<ellipse cx="1735.3" cy="930.2" rx="6.4" ry="4.3" fill="#bf6cb8" transform="rotate(-158 1735.3 930.2)"/>
<ellipse cx="1735.3" cy="928.6" rx="6" ry="3.5" fill="#ea98e2" transform="rotate(-158 1735.3 928.6)"/>
<ellipse cx="1752.6" cy="921.8" rx="5" ry="2.9" fill="#5a4a6c" transform="rotate(-48 1752.6 921.8)"/>
<ellipse cx="1749.2" cy="913.3" rx="6.4" ry="4.3" fill="#bf6cb8" transform="rotate(-54 1749.2 913.3)"/>
<ellipse cx="1749.2" cy="911.7" rx="6" ry="3.5" fill="#ea98e2" transform="rotate(-54 1749.2 911.7)"/>
<ellipse cx="1730.5" cy="916.0" rx="6.4" ry="4.3" fill="#bf6cb8" transform="rotate(-163 1730.5 916.0)"/>
<ellipse cx="1730.5" cy="914.4" rx="6" ry="3.5" fill="#ea98e2" transform="rotate(-163 1730.5 914.4)"/>
<ellipse cx="1726.7" cy="908.2" rx="6.4" ry="4.3" fill="#bf6cb8" transform="rotate(-168 1726.7 908.2)"/>
<ellipse cx="1726.7" cy="906.6" rx="6" ry="3.5" fill="#ea98e2" transform="rotate(-168 1726.7 906.6)"/>
<ellipse cx="1742.3" cy="897.7" rx="6.4" ry="4.3" fill="#bf6cb8" transform="rotate(-59 1742.3 897.7)"/>
<ellipse cx="1742.3" cy="896.1" rx="6" ry="3.5" fill="#ea98e2" transform="rotate(-59 1742.3 896.1)"/>
<ellipse cx="1737.0" cy="888.6" rx="6.4" ry="4.3" fill="#bf6cb8" transform="rotate(-64 1737.0 888.6)"/>
<ellipse cx="1737.0" cy="887.0" rx="6" ry="3.5" fill="#ea98e2" transform="rotate(-64 1737.0 887.0)"/>
<ellipse cx="1719.0" cy="894.3" rx="6.4" ry="4.3" fill="#bf6cb8" transform="rotate(-174 1719.0 894.3)"/>
<ellipse cx="1719.0" cy="892.7" rx="6" ry="3.5" fill="#ea98e2" transform="rotate(-174 1719.0 892.7)"/>
<ellipse cx="1713.7" cy="886.8" rx="6.4" ry="4.3" fill="#bf6cb8" transform="rotate(-178 1713.7 886.8)"/>
<ellipse cx="1713.7" cy="885.2" rx="6" ry="3.5" fill="#ea98e2" transform="rotate(-178 1713.7 885.2)"/>
<ellipse cx="1727.1" cy="872.4" rx="5" ry="2.9" fill="#5a4a6c" transform="rotate(-69 1727.1 872.4)"/>
<ellipse cx="1720.1" cy="864.8" rx="6.4" ry="4.3" fill="#bf6cb8" transform="rotate(-73 1720.1 864.8)"/>
<ellipse cx="1720.1" cy="863.2" rx="6" ry="3.5" fill="#ea98e2" transform="rotate(-73 1720.1 863.2)"/>
<ellipse cx="1703.1" cy="873.2" rx="6.4" ry="4.3" fill="#bf6cb8" transform="rotate(177 1703.1 873.2)"/>
<ellipse cx="1703.1" cy="871.6" rx="6" ry="3.5" fill="#ea98e2" transform="rotate(177 1703.1 871.6)"/>
<ellipse cx="1712.2" cy="869.0" rx="6.4" ry="4.3" fill="#bf6cb8" transform="rotate(-90 1712.2 869.0)"/>
<ellipse cx="1712.2" cy="867.4" rx="6" ry="3.5" fill="#ea98e2" transform="rotate(-90 1712.2 867.4)"/>
<ellipse cx="1697.1" cy="971.4" rx="6.4" ry="4.3" fill="#bf6cb8" transform="rotate(-30 1697.1 971.4)"/>
<ellipse cx="1697.1" cy="969.8" rx="6" ry="3.5" fill="#ea98e2" transform="rotate(-30 1697.1 969.8)"/>
<ellipse cx="1678.8" cy="967.1" rx="6.4" ry="4.3" fill="#bf6cb8" transform="rotate(-139 1678.8 967.1)"/>
<ellipse cx="1678.8" cy="965.5" rx="6" ry="3.5" fill="#ea98e2" transform="rotate(-139 1678.8 965.5)"/>
<ellipse cx="1677.8" cy="960.4" rx="6.4" ry="4.3" fill="#bf6cb8" transform="rotate(-148 1677.8 960.4)"/>
<ellipse cx="1677.8" cy="958.8" rx="6" ry="3.5" fill="#ea98e2" transform="rotate(-148 1677.8 958.8)"/>
<ellipse cx="1696.1" cy="956.1" rx="6.4" ry="4.3" fill="#bf6cb8" transform="rotate(-38 1696.1 956.1)"/>
<ellipse cx="1696.1" cy="954.5" rx="6" ry="3.5" fill="#ea98e2" transform="rotate(-38 1696.1 954.5)"/>
<ellipse cx="1694.3" cy="944.0" rx="5" ry="2.9" fill="#5a4a6c" transform="rotate(-43 1694.3 944.0)"/>
<ellipse cx="1675.4" cy="943.4" rx="6.4" ry="4.3" fill="#bf6cb8" transform="rotate(-153 1675.4 943.4)"/>
<ellipse cx="1675.4" cy="941.8" rx="6" ry="3.5" fill="#ea98e2" transform="rotate(-153 1675.4 941.8)"/>
<ellipse cx="1684.8" cy="943.8" rx="6.4" ry="4.3" fill="#bf6cb8" transform="rotate(-90 1684.8 943.8)"/>
<ellipse cx="1684.8" cy="942.2" rx="6" ry="3.5" fill="#ea98e2" transform="rotate(-90 1684.8 942.2)"/>
<ellipse cx="1771.8" cy="969.9" rx="6.4" ry="4.3" fill="#bf6cb8" transform="rotate(-44 1771.8 969.9)"/>
<ellipse cx="1771.8" cy="968.3" rx="6" ry="3.5" fill="#ea98e2" transform="rotate(-44 1771.8 968.3)"/>
<ellipse cx="1753.2" cy="970.5" rx="6.4" ry="4.3" fill="#bf6cb8" transform="rotate(-153 1753.2 970.5)"/>
<ellipse cx="1753.2" cy="968.9" rx="6" ry="3.5" fill="#ea98e2" transform="rotate(-153 1753.2 968.9)"/>
<ellipse cx="1753.8" cy="961.9" rx="6.4" ry="4.3" fill="#bf6cb8" transform="rotate(-144 1753.8 961.9)"/>
<ellipse cx="1753.8" cy="960.3" rx="6" ry="3.5" fill="#ea98e2" transform="rotate(-144 1753.8 960.3)"/>
<ellipse cx="1772.4" cy="957.9" rx="5" ry="2.9" fill="#5a4a6c" transform="rotate(-35 1772.4 957.9)"/>
<ellipse cx="1773.5" cy="950.4" rx="6.4" ry="4.3" fill="#bf6cb8" transform="rotate(-30 1773.5 950.4)"/>
<ellipse cx="1773.5" cy="948.8" rx="6" ry="3.5" fill="#ea98e2" transform="rotate(-30 1773.5 948.8)"/>
<ellipse cx="1755.5" cy="944.9" rx="6.4" ry="4.3" fill="#bf6cb8" transform="rotate(-140 1755.5 944.9)"/>
<ellipse cx="1755.5" cy="943.3" rx="6" ry="3.5" fill="#ea98e2" transform="rotate(-140 1755.5 943.3)"/>
<ellipse cx="1757.4" cy="932.7" rx="6.4" ry="4.3" fill="#bf6cb8" transform="rotate(-136 1757.4 932.7)"/>
<ellipse cx="1757.4" cy="931.1" rx="6" ry="3.5" fill="#ea98e2" transform="rotate(-136 1757.4 931.1)"/>
<ellipse cx="1776.4" cy="930.7" rx="6.4" ry="4.3" fill="#bf6cb8" transform="rotate(-27 1776.4 930.7)"/>
<ellipse cx="1776.4" cy="929.1" rx="6" ry="3.5" fill="#ea98e2" transform="rotate(-27 1776.4 929.1)"/>
<ellipse cx="1767.0" cy="930.5" rx="6.4" ry="4.3" fill="#bf6cb8" transform="rotate(-90 1767.0 930.5)"/>
<ellipse cx="1767.0" cy="928.9" rx="6" ry="3.5" fill="#ea98e2" transform="rotate(-90 1767.0 928.9)"/>
<ellipse cx="1741.8" cy="967.2" rx="5" ry="2.9" fill="#5a4a6c" transform="rotate(-48 1741.8 967.2)"/>
<ellipse cx="1723.2" cy="969.2" rx="6.4" ry="4.3" fill="#bf6cb8" transform="rotate(-157 1723.2 969.2)"/>
<ellipse cx="1723.2" cy="967.6" rx="6" ry="3.5" fill="#ea98e2" transform="rotate(-157 1723.2 967.6)"/>
<ellipse cx="1725.9" cy="955.0" rx="6.4" ry="4.3" fill="#bf6cb8" transform="rotate(-137 1725.9 955.0)"/>
<ellipse cx="1725.9" cy="953.4" rx="6" ry="3.5" fill="#ea98e2" transform="rotate(-137 1725.9 953.4)"/>
<ellipse cx="1745.0" cy="953.0" rx="6.4" ry="4.3" fill="#bf6cb8" transform="rotate(-27 1745.0 953.0)"/>
<ellipse cx="1745.0" cy="951.4" rx="6" ry="3.5" fill="#ea98e2" transform="rotate(-27 1745.0 951.4)"/>
<ellipse cx="1735.9" cy="952.7" rx="6.4" ry="4.3" fill="#bf6cb8" transform="rotate(-90 1735.9 952.7)"/>
<ellipse cx="1735.9" cy="951.1" rx="6" ry="3.5" fill="#ea98e2" transform="rotate(-90 1735.9 951.1)"/>
<g transform="translate(1388.5 881.0) scale(0.9)"><path d="M11 9 Q12 1 22 0.5 Q31 0.5 34 6 L36 13 L28 14Z" fill="#3b2d66"/><path d="M14 3.4 H17 M20 1.6 H23.4 M26.4 2.6 H29.4" stroke="#f2e6f2" stroke-width="1.6"/><path d="M-0.6 20 L13 8 Q22 5 30 11 L34.5 16 V27 L22 36 Q16 37.6 12 33 Z" fill="#3b2d66"/><path d="M33 17.5 L37.6 12.6 Q44 11.6 45.4 15 V27.4 Q44.4 30.6 38 29.4 L33 25Z" fill="#3b2d66"/><rect x="40.6" y="14" width="2.8" height="13.6" fill="#efe6f4"/><rect x="29.6" y="16.6" width="3.4" height="8" fill="#f6f0f6"/><path d="M0.8 20 L13.4 9.4 L18.4 8.8 Q15.4 20 17 30.4 L12.4 32 Z" fill="#ef7d52"/><path d="M4 23 L12.4 32 L17 30.4 Q16.2 26 16.2 24Z" fill="#e26a48"/><path d="M18.4 8.8 Q23 8 27 11 Q28.6 19 27.4 25 L17 30.6 Q15.4 20 18.4 8.8Z" fill="#ffffff"/><path d="M16.6 26 L27.4 21.4 V25 L17 30.6Z" fill="#e6c4c8"/><circle cx="9.6" cy="19.6" r="3" fill="#fff"/><circle cx="10.2" cy="20" r="1.7" fill="#1c1c44"/></g>
<g transform="translate(1416.7 870.5) scale(0.93)"><path d="M11 9 Q12 1 22 0.5 Q31 0.5 34 6 L36 13 L28 14Z" fill="#3b2d66"/><path d="M14 3.4 H17 M20 1.6 H23.4 M26.4 2.6 H29.4" stroke="#f2e6f2" stroke-width="1.6"/><path d="M-0.6 20 L13 8 Q22 5 30 11 L34.5 16 V27 L22 36 Q16 37.6 12 33 Z" fill="#3b2d66"/><path d="M33 17.5 L37.6 12.6 Q44 11.6 45.4 15 V27.4 Q44.4 30.6 38 29.4 L33 25Z" fill="#3b2d66"/><rect x="40.6" y="14" width="2.8" height="13.6" fill="#efe6f4"/><rect x="29.6" y="16.6" width="3.4" height="8" fill="#f6f0f6"/><path d="M0.8 20 L13.4 9.4 L18.4 8.8 Q15.4 20 17 30.4 L12.4 32 Z" fill="#ef7d52"/><path d="M4 23 L12.4 32 L17 30.4 Q16.2 26 16.2 24Z" fill="#e26a48"/><path d="M18.4 8.8 Q23 8 27 11 Q28.6 19 27.4 25 L17 30.6 Q15.4 20 18.4 8.8Z" fill="#ffffff"/><path d="M16.6 26 L27.4 21.4 V25 L17 30.6Z" fill="#e6c4c8"/><circle cx="9.6" cy="19.6" r="3" fill="#fff"/><circle cx="10.2" cy="20" r="1.7" fill="#1c1c44"/></g>
<g transform="translate(1434.0 893.0) scale(0.93)"><path d="M11 9 Q12 1 22 0.5 Q31 0.5 34 6 L36 13 L28 14Z" fill="#3b2d66"/><path d="M14 3.4 H17 M20 1.6 H23.4 M26.4 2.6 H29.4" stroke="#f2e6f2" stroke-width="1.6"/><path d="M-0.6 20 L13 8 Q22 5 30 11 L34.5 16 V27 L22 36 Q16 37.6 12 33 Z" fill="#3b2d66"/><path d="M33 17.5 L37.6 12.6 Q44 11.6 45.4 15 V27.4 Q44.4 30.6 38 29.4 L33 25Z" fill="#3b2d66"/><rect x="40.6" y="14" width="2.8" height="13.6" fill="#efe6f4"/><rect x="29.6" y="16.6" width="3.4" height="8" fill="#f6f0f6"/><path d="M0.8 20 L13.4 9.4 L18.4 8.8 Q15.4 20 17 30.4 L12.4 32 Z" fill="#ef7d52"/><path d="M4 23 L12.4 32 L17 30.4 Q16.2 26 16.2 24Z" fill="#e26a48"/><path d="M18.4 8.8 Q23 8 27 11 Q28.6 19 27.4 25 L17 30.6 Q15.4 20 18.4 8.8Z" fill="#ffffff"/><path d="M16.6 26 L27.4 21.4 V25 L17 30.6Z" fill="#e6c4c8"/><circle cx="9.6" cy="19.6" r="3" fill="#fff"/><circle cx="10.2" cy="20" r="1.7" fill="#1c1c44"/></g>
<g transform="translate(1475.7 882.9) scale(1.0)"><path d="M11 9 Q12 1 22 0.5 Q31 0.5 34 6 L36 13 L28 14Z" fill="#3b2d66"/><path d="M14 3.4 H17 M20 1.6 H23.4 M26.4 2.6 H29.4" stroke="#f2e6f2" stroke-width="1.6"/><path d="M-0.6 20 L13 8 Q22 5 30 11 L34.5 16 V27 L22 36 Q16 37.6 12 33 Z" fill="#3b2d66"/><path d="M33 17.5 L37.6 12.6 Q44 11.6 45.4 15 V27.4 Q44.4 30.6 38 29.4 L33 25Z" fill="#3b2d66"/><rect x="40.6" y="14" width="2.8" height="13.6" fill="#efe6f4"/><rect x="29.6" y="16.6" width="3.4" height="8" fill="#f6f0f6"/><path d="M0.8 20 L13.4 9.4 L18.4 8.8 Q15.4 20 17 30.4 L12.4 32 Z" fill="#ef7d52"/><path d="M4 23 L12.4 32 L17 30.4 Q16.2 26 16.2 24Z" fill="#e26a48"/><path d="M18.4 8.8 Q23 8 27 11 Q28.6 19 27.4 25 L17 30.6 Q15.4 20 18.4 8.8Z" fill="#ffffff"/><path d="M16.6 26 L27.4 21.4 V25 L17 30.6Z" fill="#e6c4c8"/><circle cx="9.6" cy="19.6" r="3" fill="#fff"/><circle cx="10.2" cy="20" r="1.7" fill="#1c1c44"/></g>
<g transform="translate(1462.0 923.0) scale(0.97)"><path d="M11 9 Q12 1 22 0.5 Q31 0.5 34 6 L36 13 L28 14Z" fill="#3b2d66"/><path d="M14 3.4 H17 M20 1.6 H23.4 M26.4 2.6 H29.4" stroke="#f2e6f2" stroke-width="1.6"/><path d="M-0.6 20 L13 8 Q22 5 30 11 L34.5 16 V27 L22 36 Q16 37.6 12 33 Z" fill="#3b2d66"/><path d="M33 17.5 L37.6 12.6 Q44 11.6 45.4 15 V27.4 Q44.4 30.6 38 29.4 L33 25Z" fill="#3b2d66"/><rect x="40.6" y="14" width="2.8" height="13.6" fill="#efe6f4"/><rect x="29.6" y="16.6" width="3.4" height="8" fill="#f6f0f6"/><path d="M0.8 20 L13.4 9.4 L18.4 8.8 Q15.4 20 17 30.4 L12.4 32 Z" fill="#ef7d52"/><path d="M4 23 L12.4 32 L17 30.4 Q16.2 26 16.2 24Z" fill="#e26a48"/><path d="M18.4 8.8 Q23 8 27 11 Q28.6 19 27.4 25 L17 30.6 Q15.4 20 18.4 8.8Z" fill="#ffffff"/><path d="M16.6 26 L27.4 21.4 V25 L17 30.6Z" fill="#e6c4c8"/><circle cx="9.6" cy="19.6" r="3" fill="#fff"/><circle cx="10.2" cy="20" r="1.7" fill="#1c1c44"/></g>
<path d="M1553.3 926.7 L1565.6 915.6 Q1573.3 897.8 1587.8 888.9 L1601.7 887.2 Q1592.2 898.9 1592.2 912.2 Q1595.6 921.1 1600.0 927.8 L1603.9 915.6 L1601.1 934.4 L1592.2 932.2 Q1587.8 945.6 1591.1 958.3 L1584.4 955.6 Q1576.7 947.8 1575.6 938.9 L1572.2 955.6 L1567.8 944.4 L1563.9 950.0 L1564.4 938.9Z" fill="#2b2c60"/>
<path d="M1554.4 926.7 L1565.6 916.7 L1571.7 916.7 L1572.2 927.8 L1566.7 937.8 L1558.9 933.3Z" fill="#f2f0fa"/>
<path d="M1556.7 930.0 L1566.7 937.8 L1571.1 930.0Z" fill="#cfc8e0"/>
<path d="M1578.9 907.8 Q1584.4 896.7 1594.4 889.4 Q1586.7 902.2 1586.7 916.7 Q1587.8 927.8 1584.4 934.4 Q1578.9 927.8 1578.9 907.8Z" fill="#f4f2fc"/>
<path d="M1594.4 889.4 Q1587.2 902.2 1587.6 916.7 Q1588.9 927.8 1585.0 937.8 Q1582.8 945.6 1585.6 954.4" fill="none" stroke="#f0b648" stroke-width="1.3"/>
<path d="M1578.3 938.9 Q1578.9 947.8 1585.0 953.9 Q1582.2 945.6 1583.3 937.8Z" fill="#f2f0fa"/>
<path d="M1595.6 923.3 L1598.9 918.9 L1598.3 930.0Z" fill="#f2f0fa"/>
<circle cx="1562.8" cy="926.1" r="2.6" fill="#5a8ad8"/><circle cx="1563.3" cy="926.1" r="1.3" fill="#1a1a40"/>
<path d="M1605.0 888.3 L1611.1 886.7 L1621.1 898.9 L1617.8 912.2 L1612.2 920.6 L1606.7 919.4 Q1611.1 903.3 1605.0 888.3Z" fill="#2a86d2"/>
<path d="M1605.0 888.3 L1611.1 886.7 L1612.2 888.9 L1608.0 890.2 Q1613.3 903.3 1609.4 918.3 L1612.2 920.6 L1606.7 919.4 Q1611.1 903.3 1605.0 888.3Z" fill="#f29a3c"/>
<path d="M1605.0 888.3 L1611.1 886.7 M1606.7 919.4 L1612.2 920.6" stroke="#1e2a6a" stroke-width="1.2" fill="none"/>
<path d="M1617.8 898.9 Q1624.4 892.2 1628.9 886.7 L1635.6 876.1 L1640.0 880.0 Q1646.7 887.8 1652.2 891.1 Q1662.2 896.7 1666.1 904.4 Q1664.4 912.2 1657.8 915.6 Q1646.7 922.2 1637.8 922.2 Q1627.8 918.9 1617.8 912.2Z" fill="#2a8ad6"/>
<path d="M1628.9 886.7 L1635.6 876.1 L1640.0 880.0 L1645.6 887.8 Q1637.8 886.7 1628.9 886.7Z" fill="#1f6fc0"/>
<path d="M1634.4 892.2 Q1643.3 888.9 1651.1 894.4 Q1643.3 894.4 1635.6 896.7Z" fill="#6cc0f4"/>
<path d="M1646.7 902.2 Q1651.1 897.8 1656.7 898.9 Q1664.4 902.2 1666.1 905.0 Q1664.4 912.2 1657.8 915.6 L1650.0 916.7 Q1644.4 910.0 1646.7 902.2Z" fill="#f4dcec"/>
<path d="M1623.3 910.0 Q1634.4 916.7 1646.7 917.2 L1657.8 915.6 L1652.2 919.4 Q1637.8 921.1 1624.4 913.3Z" fill="#e8a78c"/>
<path d="M1643.3 916.7 L1652.2 917.8 L1646.7 924.4 L1642.2 926.7Z" fill="#f2903a"/>
<circle cx="1654.4" cy="902.0" r="3" fill="#1c1c40"/><circle cx="1655.6" cy="900.9" r="1" fill="#fff"/>
<path d="M1272.0 982.8 L1280.0 983.2 L1288.0 983.5 L1296.0 983.6 L1304.0 983.4 L1312.0 983.0 L1320.0 982.5 L1328.0 981.9 L1336.0 981.3 L1344.0 980.8 L1352.0 980.5 L1360.0 980.4 L1368.0 980.5 L1376.0 980.9 L1384.0 981.4 L1392.0 982.0 L1400.0 982.6 L1408.0 983.1 L1416.0 983.5 L1424.0 983.6 L1432.0 983.5 L1440.0 983.2 L1448.0 982.6 L1456.0 982.1 L1464.0 981.4 L1472.0 980.9 L1480.0 980.6 L1488.0 980.4 L1496.0 980.5 L1504.0 980.8 L1512.0 981.3 L1520.0 981.9 L1528.0 982.5 L1536.0 983.0 L1544.0 983.4 L1552.0 983.6 L1560.0 983.5 L1568.0 983.3 L1576.0 982.8 L1584.0 982.2 L1592.0 981.6 L1600.0 981.0 L1608.0 980.6 L1616.0 980.4 L1624.0 980.4 L1632.0 980.7 L1640.0 981.1 L1648.0 981.7 L1656.0 982.3 L1664.0 982.9 L1672.0 983.3 L1680.0 983.6 L1688.0 983.6 L1696.0 983.3 L1704.0 982.9 L1712.0 982.4 L1720.0 981.7 L1728.0 981.2 L1736.0 980.7 L1744.0 980.4 L1752.0 980.4 L1760.0 980.6 L1768.0 981.0 L1776.0 981.6 L1784.0 982.2 L1792.0 982.8 L1800.0 983.2 L1808.0 983.5 L1816.0 983.6 L1824.0 983.4 L1832.0 983.0 L1840.0 982.5 L1848.0 981.9 L1856.0 981.3 L1864.0 980.8 L1872.0 980.5 L1880.0 980.4 L1888.0 980.5 L1896.0 980.9 L1904.0 981.4 L1912.0 982.0 L1912 1023 L1272 1023Z" fill="#c2bfb1"/>
<rect x="1479" y="987" width="2" height="1" fill="#d2d0c4"/><rect x="1506" y="986" width="3" height="1" fill="#d2d0c4"/><rect x="1549" y="986" width="2" height="2" fill="#cdcbbf"/><rect x="1311" y="993" width="3" height="2" fill="#d2d0c4"/><rect x="1640" y="991" width="3" height="1" fill="#d8d6ca"/><rect x="1458" y="987" width="2" height="2" fill="#a9a79c"/><rect x="1629" y="995" width="2" height="2" fill="#d8d6ca"/><rect x="1510" y="993" width="2" height="2" fill="#d2d0c4"/><rect x="1666" y="992" width="6" height="2" fill="#cdcbbf"/><rect x="1645" y="992" width="4" height="1" fill="#d8d6ca"/><rect x="1717" y="989" width="4" height="2" fill="#cdcbbf"/><rect x="1829" y="996" width="4" height="2" fill="#d2d0c4"/><rect x="1349" y="991" width="4" height="1" fill="#cdcbbf"/><rect x="1541" y="999" width="2" height="2" fill="#a9a79c"/><rect x="1490" y="990" width="6" height="2" fill="#cdcbbf"/><rect x="1318" y="986" width="4" height="2" fill="#d2d0c4"/><rect x="1312" y="996" width="6" height="2" fill="#cdcbbf"/><rect x="1836" y="990" width="6" height="2" fill="#d8d6ca"/><rect x="1661" y="992" width="3" height="2" fill="#d8d6ca"/><rect x="1742" y="991" width="6" height="1" fill="#d8d6ca"/><rect x="1559" y="993" width="3" height="2" fill="#a9a79c"/><rect x="1722" y="1000" width="6" height="1" fill="#d8d6ca"/><rect x="1327" y="987" width="3" height="1" fill="#cdcbbf"/><rect x="1801" y="988" width="4" height="1" fill="#d8d6ca"/><rect x="1540" y="991" width="4" height="1" fill="#d2d0c4"/><rect x="1564" y="998" width="6" height="2" fill="#cdcbbf"/><rect x="1524" y="992" width="6" height="1" fill="#d8d6ca"/><rect x="1317" y="988" width="3" height="1" fill="#a9a79c"/><rect x="1655" y="987" width="3" height="2" fill="#d2d0c4"/><rect x="1876" y="994" width="2" height="1" fill="#cdcbbf"/><rect x="1368" y="989" width="4" height="2" fill="#a9a79c"/><rect x="1575" y="987" width="6" height="2" fill="#cdcbbf"/><rect x="1581" y="986" width="2" height="2" fill="#a9a79c"/><rect x="1743" y="992" width="3" height="2" fill="#d2d0c4"/><rect x="1404" y="999" width="4" height="1" fill="#d2d0c4"/><rect x="1755" y="989" width="2" height="2" fill="#a9a79c"/><rect x="1603" y="999" width="4" height="1" fill="#a9a79c"/><rect x="1678" y="994" width="3" height="1" fill="#cdcbbf"/><rect x="1743" y="988" width="6" height="2" fill="#d2d0c4"/><rect x="1901" y="997" width="6" height="2" fill="#d8d6ca"/><rect x="1713" y="999" width="6" height="2" fill="#a9a79c"/><rect x="1879" y="990" width="3" height="1" fill="#d8d6ca"/><rect x="1572" y="990" width="6" height="2" fill="#d2d0c4"/><rect x="1578" y="995" width="2" height="2" fill="#d2d0c4"/><rect x="1851" y="997" width="3" height="2" fill="#d8d6ca"/><rect x="1549" y="995" width="2" height="2" fill="#cdcbbf"/><rect x="1568" y="996" width="2" height="2" fill="#d8d6ca"/><rect x="1382" y="987" width="3" height="2" fill="#cdcbbf"/><rect x="1785" y="987" width="6" height="2" fill="#a9a79c"/><rect x="1373" y="993" width="2" height="1" fill="#d2d0c4"/><rect x="1608" y="999" width="6" height="1" fill="#d8d6ca"/><rect x="1292" y="988" width="3" height="2" fill="#a9a79c"/><rect x="1438" y="991" width="3" height="1" fill="#a9a79c"/><rect x="1843" y="995" width="6" height="2" fill="#d8d6ca"/><rect x="1611" y="993" width="2" height="2" fill="#d8d6ca"/><rect x="1660" y="997" width="3" height="1" fill="#d8d6ca"/><rect x="1574" y="996" width="2" height="2" fill="#cdcbbf"/><rect x="1771" y="987" width="2" height="1" fill="#d8d6ca"/><rect x="1450" y="997" width="6" height="2" fill="#d2d0c4"/><rect x="1756" y="999" width="6" height="2" fill="#d8d6ca"/><rect x="1713" y="992" width="6" height="2" fill="#d8d6ca"/><rect x="1717" y="998" width="4" height="2" fill="#d8d6ca"/><rect x="1807" y="987" width="2" height="2" fill="#cdcbbf"/><rect x="1474" y="995" width="6" height="1" fill="#d8d6ca"/><rect x="1698" y="997" width="3" height="2" fill="#a9a79c"/><rect x="1365" y="998" width="6" height="1" fill="#d2d0c4"/><rect x="1526" y="992" width="3" height="1" fill="#cdcbbf"/><rect x="1904" y="991" width="6" height="1" fill="#a9a79c"/><rect x="1476" y="996" width="2" height="2" fill="#cdcbbf"/><rect x="1553" y="985" width="4" height="2" fill="#a9a79c"/><rect x="1599" y="986" width="3" height="1" fill="#d2d0c4"/><rect x="1442" y="986" width="3" height="2" fill="#d8d6ca"/><rect x="1794" y="998" width="4" height="2" fill="#d8d6ca"/><rect x="1614" y="993" width="6" height="2" fill="#a9a79c"/><rect x="1331" y="986" width="3" height="2" fill="#d2d0c4"/><rect x="1444" y="985" width="2" height="2" fill="#d2d0c4"/><rect x="1660" y="988" width="4" height="1" fill="#cdcbbf"/><rect x="1281" y="1000" width="6" height="2" fill="#d8d6ca"/><rect x="1301" y="996" width="2" height="1" fill="#a9a79c"/><rect x="1306" y="988" width="4" height="2" fill="#a9a79c"/><rect x="1611" y="988" width="6" height="2" fill="#d8d6ca"/><rect x="1446" y="997" width="4" height="1" fill="#d2d0c4"/><rect x="1286" y="993" width="3" height="2" fill="#cdcbbf"/><rect x="1430" y="992" width="6" height="2" fill="#cdcbbf"/><rect x="1620" y="998" width="4" height="2" fill="#d8d6ca"/><rect x="1897" y="990" width="3" height="2" fill="#a9a79c"/><rect x="1897" y="998" width="2" height="1" fill="#a9a79c"/><rect x="1547" y="986" width="6" height="2" fill="#a9a79c"/><rect x="1654" y="995" width="2" height="2" fill="#d8d6ca"/><rect x="1374" y="992" width="4" height="2" fill="#a9a79c"/><rect x="1891" y="993" width="3" height="1" fill="#a9a79c"/><rect x="1412" y="988" width="4" height="2" fill="#d2d0c4"/><rect x="1575" y="993" width="3" height="1" fill="#d2d0c4"/><rect x="1332" y="997" width="3" height="2" fill="#d2d0c4"/><rect x="1524" y="989" width="3" height="1" fill="#d8d6ca"/><rect x="1691" y="996" width="6" height="2" fill="#cdcbbf"/><rect x="1369" y="996" width="3" height="1" fill="#cdcbbf"/><rect x="1739" y="997" width="3" height="2" fill="#d2d0c4"/><rect x="1798" y="994" width="3" height="1" fill="#d2d0c4"/><rect x="1301" y="995" width="2" height="2" fill="#cdcbbf"/><rect x="1628" y="994" width="3" height="2" fill="#a9a79c"/><rect x="1276" y="997" width="2" height="2" fill="#d2d0c4"/><rect x="1747" y="992" width="2" height="2" fill="#d8d6ca"/><rect x="1736" y="988" width="6" height="2" fill="#cdcbbf"/><rect x="1323" y="999" width="4" height="1" fill="#d8d6ca"/><rect x="1323" y="987" width="4" height="2" fill="#a9a79c"/><rect x="1668" y="987" width="6" height="1" fill="#cdcbbf"/><rect x="1444" y="995" width="3" height="2" fill="#cdcbbf"/><rect x="1458" y="993" width="6" height="2" fill="#cdcbbf"/><rect x="1760" y="1000" width="3" height="2" fill="#d2d0c4"/><rect x="1868" y="985" width="6" height="1" fill="#cdcbbf"/><rect x="1904" y="991" width="3" height="1" fill="#d2d0c4"/><rect x="1364" y="993" width="4" height="1" fill="#a9a79c"/><rect x="1836" y="996" width="3" height="2" fill="#cdcbbf"/><rect x="1524" y="987" width="6" height="2" fill="#cdcbbf"/><rect x="1531" y="996" width="6" height="2" fill="#cdcbbf"/><rect x="1474" y="998" width="2" height="2" fill="#a9a79c"/><rect x="1806" y="987" width="3" height="2" fill="#d2d0c4"/><rect x="1846" y="989" width="4" height="1" fill="#cdcbbf"/><rect x="1521" y="998" width="2" height="2" fill="#cdcbbf"/><rect x="1753" y="998" width="4" height="1" fill="#d2d0c4"/><rect x="1803" y="989" width="3" height="1" fill="#a9a79c"/><rect x="1551" y="990" width="4" height="2" fill="#d2d0c4"/><rect x="1789" y="994" width="3" height="2" fill="#d2d0c4"/><rect x="1305" y="996" width="6" height="2" fill="#d8d6ca"/><rect x="1683" y="989" width="2" height="2" fill="#d8d6ca"/><rect x="1382" y="991" width="4" height="2" fill="#a9a79c"/><rect x="1743" y="1000" width="4" height="2" fill="#d8d6ca"/><rect x="1465" y="993" width="6" height="1" fill="#d8d6ca"/><rect x="1682" y="986" width="6" height="2" fill="#d8d6ca"/><rect x="1561" y="990" width="6" height="2" fill="#d8d6ca"/><rect x="1621" y="989" width="3" height="2" fill="#d2d0c4"/><rect x="1476" y="991" width="3" height="1" fill="#cdcbbf"/><rect x="1517" y="996" width="3" height="2" fill="#a9a79c"/><rect x="1488" y="986" width="4" height="2" fill="#a9a79c"/><rect x="1354" y="993" width="3" height="1" fill="#a9a79c"/><rect x="1843" y="991" width="6" height="2" fill="#a9a79c"/><rect x="1812" y="998" width="2" height="1" fill="#d2d0c4"/><rect x="1544" y="996" width="6" height="2" fill="#cdcbbf"/><rect x="1274" y="991" width="6" height="2" fill="#d8d6ca"/><rect x="1770" y="988" width="3" height="2" fill="#d2d0c4"/><rect x="1871" y="996" width="6" height="1" fill="#d2d0c4"/><rect x="1275" y="987" width="2" height="2" fill="#a9a79c"/><rect x="1884" y="994" width="6" height="2" fill="#d2d0c4"/><rect x="1337" y="990" width="3" height="2" fill="#a9a79c"/><rect x="1416" y="994" width="2" height="2" fill="#a9a79c"/><rect x="1906" y="989" width="4" height="2" fill="#d8d6ca"/><rect x="1575" y="989" width="3" height="1" fill="#cdcbbf"/><rect x="1721" y="990" width="2" height="1" fill="#cdcbbf"/><rect x="1835" y="995" width="2" height="2" fill="#d8d6ca"/><rect x="1697" y="999" width="3" height="2" fill="#d2d0c4"/><rect x="1715" y="996" width="4" height="2" fill="#cdcbbf"/><rect x="1400" y="997" width="2" height="1" fill="#cdcbbf"/><rect x="1889" y="990" width="3" height="1" fill="#cdcbbf"/><rect x="1414" y="996" width="4" height="1" fill="#cdcbbf"/><rect x="1661" y="998" width="6" height="2" fill="#d2d0c4"/><rect x="1876" y="987" width="6" height="1" fill="#d8d6ca"/><rect x="1289" y="994" width="6" height="1" fill="#d2d0c4"/><rect x="1391" y="992" width="4" height="2" fill="#d2d0c4"/><rect x="1906" y="999" width="4" height="1" fill="#d8d6ca"/><rect x="1688" y="993" width="6" height="1" fill="#a9a79c"/><rect x="1695" y="991" width="4" height="2" fill="#cdcbbf"/><rect x="1381" y="985" width="4" height="1" fill="#a9a79c"/><rect x="1540" y="998" width="3" height="2" fill="#a9a79c"/><rect x="1761" y="990" width="6" height="1" fill="#d2d0c4"/><rect x="1721" y="988" width="6" height="1" fill="#a9a79c"/><rect x="1505" y="998" width="2" height="2" fill="#cdcbbf"/><rect x="1431" y="994" width="6" height="1" fill="#cdcbbf"/><rect x="1296" y="986" width="2" height="2" fill="#d8d6ca"/><rect x="1748" y="998" width="4" height="2" fill="#a9a79c"/>
<path d="M1272.0 1003.0 L1280.0 1003.3 L1288.0 1003.0 L1296.0 1002.3 L1304.0 1001.3 L1312.0 1000.4 L1320.0 999.8 L1328.0 999.7 L1336.0 1000.2 L1344.0 1001.0 L1352.0 1002.0 L1360.0 1002.9 L1368.0 1003.3 L1376.0 1003.2 L1384.0 1002.5 L1392.0 1001.6 L1400.0 1000.6 L1408.0 999.9 L1416.0 999.7 L1424.0 1000.0 L1432.0 1000.8 L1440.0 1001.8 L1448.0 1002.7 L1456.0 1003.2 L1464.0 1003.2 L1472.0 1002.7 L1480.0 1001.8 L1488.0 1000.8 L1496.0 1000.1 L1504.0 999.7 L1512.0 999.9 L1520.0 1000.6 L1528.0 1001.5 L1536.0 1002.5 L1544.0 1003.1 L1552.0 1003.3 L1560.0 1002.9 L1568.0 1002.1 L1576.0 1001.1 L1584.0 1000.2 L1592.0 999.7 L1600.0 999.8 L1608.0 1000.4 L1616.0 1001.3 L1624.0 1002.3 L1632.0 1003.0 L1640.0 1003.3 L1648.0 1003.0 L1656.0 1002.3 L1664.0 1001.3 L1672.0 1000.4 L1680.0 999.8 L1688.0 999.7 L1696.0 1000.2 L1704.0 1001.0 L1712.0 1002.0 L1720.0 1002.9 L1728.0 1003.3 L1736.0 1003.2 L1744.0 1002.5 L1752.0 1001.6 L1760.0 1000.6 L1768.0 999.9 L1776.0 999.7 L1784.0 1000.0 L1792.0 1000.8 L1800.0 1001.8 L1808.0 1002.7 L1816.0 1003.2 L1824.0 1003.2 L1832.0 1002.7 L1840.0 1001.8 L1848.0 1000.8 L1856.0 1000.1 L1864.0 999.7 L1872.0 999.9 L1880.0 1000.6 L1888.0 1001.5 L1896.0 1002.5 L1904.0 1003.1 L1912.0 1003.3 L1912 1023 L1272 1023Z" fill="#a3a399"/>
<path d="M1272.0 1008.5 L1280.0 1008.4 L1288.0 1007.7 L1296.0 1006.6 L1304.0 1005.6 L1312.0 1004.8 L1320.0 1004.5 L1328.0 1004.8 L1336.0 1005.7 L1344.0 1006.8 L1352.0 1007.8 L1360.0 1008.4 L1368.0 1008.4 L1376.0 1007.9 L1384.0 1006.9 L1392.0 1005.8 L1400.0 1004.9 L1408.0 1004.5 L1416.0 1004.7 L1424.0 1005.4 L1432.0 1006.5 L1440.0 1007.6 L1448.0 1008.3 L1456.0 1008.5 L1464.0 1008.1 L1472.0 1007.2 L1480.0 1006.1 L1488.0 1005.1 L1496.0 1004.6 L1504.0 1004.6 L1512.0 1005.2 L1520.0 1006.2 L1528.0 1007.3 L1536.0 1008.2 L1544.0 1008.5 L1552.0 1008.2 L1560.0 1007.4 L1568.0 1006.4 L1576.0 1005.3 L1584.0 1004.6 L1592.0 1004.5 L1600.0 1005.0 L1608.0 1006.0 L1616.0 1007.1 L1624.0 1008.0 L1632.0 1008.5 L1640.0 1008.4 L1648.0 1007.7 L1656.0 1006.6 L1664.0 1005.6 L1672.0 1004.8 L1680.0 1004.5 L1688.0 1004.8 L1696.0 1005.7 L1704.0 1006.8 L1712.0 1007.8 L1720.0 1008.4 L1728.0 1008.4 L1736.0 1007.9 L1744.0 1006.9 L1752.0 1005.8 L1760.0 1004.9 L1768.0 1004.5 L1776.0 1004.7 L1784.0 1005.4 L1792.0 1006.5 L1800.0 1007.6 L1808.0 1008.3 L1816.0 1008.5 L1824.0 1008.1 L1832.0 1007.2 L1840.0 1006.1 L1848.0 1005.1 L1856.0 1004.6 L1864.0 1004.6 L1872.0 1005.2 L1880.0 1006.2 L1888.0 1007.3 L1896.0 1008.2 L1904.0 1008.5 L1912.0 1008.2 L1912 1023 L1272 1023Z" fill="#4d5688"/>
<path d="M1272.0 1014.3 L1280.0 1015.0 L1288.0 1015.4 L1296.0 1015.6 L1304.0 1015.4 L1312.0 1015.0 L1320.0 1014.3 L1328.0 1013.6 L1336.0 1013.0 L1344.0 1012.5 L1352.0 1012.4 L1360.0 1012.6 L1368.0 1013.1 L1376.0 1013.8 L1384.0 1014.5 L1392.0 1015.1 L1400.0 1015.5 L1408.0 1015.6 L1416.0 1015.3 L1424.0 1014.8 L1432.0 1014.1 L1440.0 1013.4 L1448.0 1012.8 L1456.0 1012.5 L1464.0 1012.4 L1472.0 1012.7 L1480.0 1013.3 L1488.0 1014.0 L1496.0 1014.7 L1504.0 1015.2 L1512.0 1015.6 L1520.0 1015.6 L1528.0 1015.2 L1536.0 1014.7 L1544.0 1014.0 L1552.0 1013.3 L1560.0 1012.7 L1568.0 1012.4 L1576.0 1012.5 L1584.0 1012.8 L1592.0 1013.4 L1600.0 1014.1 L1608.0 1014.8 L1616.0 1015.3 L1624.0 1015.6 L1632.0 1015.5 L1640.0 1015.1 L1648.0 1014.5 L1656.0 1013.8 L1664.0 1013.1 L1672.0 1012.6 L1680.0 1012.4 L1688.0 1012.5 L1696.0 1013.0 L1704.0 1013.6 L1712.0 1014.3 L1720.0 1015.0 L1728.0 1015.4 L1736.0 1015.6 L1744.0 1015.4 L1752.0 1015.0 L1760.0 1014.3 L1768.0 1013.6 L1776.0 1013.0 L1784.0 1012.5 L1792.0 1012.4 L1800.0 1012.6 L1808.0 1013.1 L1816.0 1013.8 L1824.0 1014.5 L1832.0 1015.1 L1840.0 1015.5 L1848.0 1015.6 L1856.0 1015.3 L1864.0 1014.8 L1872.0 1014.1 L1880.0 1013.4 L1888.0 1012.8 L1896.0 1012.5 L1904.0 1012.4 L1912.0 1012.7 L1912 1023 L1272 1023Z" fill="#363e70"/>
<clipPath id="swc"><rect x="1340" y="979" width="110" height="30"/></clipPath><g clip-path="url(#swc)">
<path d="M1359.3 956.2 L1364.4 951.1 L1366.5 963.3 L1373.6 977.6 L1383.8 987.8 L1394.0 995.9 L1382.8 993.9 L1370.5 985.7 L1361.4 971.5Z" fill="#237f93"/>
<path d="M1424.5 941.9 L1426.0 955.2 L1422.5 969.4 L1417.4 979.6 L1411.3 990.8 L1399.1 995.9 L1403.1 986.7 L1413.3 973.5 L1420.4 957.2Z" fill="#2a93a0"/>
<path d="M1365.5 920.5 L1369.5 916.5 L1370.5 935.8 L1375.6 947.0 L1378.7 957.2 L1377.7 971.5 L1373.6 961.3 L1367.5 947.0 L1364.9 932.8Z" fill="#2fa9a0"/>
<path d="M1387.9 899.2 L1388.9 905.3 L1380.7 914.4 L1377.2 923.6 L1377.7 934.8 L1380.7 943.0 L1378.7 947.0 L1372.6 935.8 L1369.5 924.6 L1371.6 912.4 L1378.7 904.3Z" fill="#8fe6a2"/>
<path d="M1378.7 904.3 L1387.9 899.2 L1373.6 913.4 L1370.5 924.6Z" fill="#a6efaa"/>
<path d="M1391.9 910.4 L1401.1 918.5 L1407.2 930.7 L1411.3 940.9 L1410.3 949.1 L1405.2 957.2 L1401.1 969.4 L1398.0 981.6 L1395.0 991.8 L1389.9 987.8 L1393.0 967.4 L1397.0 955.2 L1399.1 943.0 L1398.0 930.7 L1395.0 918.5Z" fill="#98eca0"/>
<path d="M1401.1 969.4 L1405.2 957.2 L1410.3 949.1 L1407.2 963.3 L1403.1 977.6 L1398.0 987.8Z" fill="#3fb98e"/>
<path d="M1395.0 930.7 L1393.0 936.8 L1388.9 947.0 L1385.8 959.2 L1385.8 971.5 L1388.9 981.6 L1393.0 991.8 L1384.8 987.8 L1380.7 979.6 L1377.7 967.4 L1377.7 955.2 L1380.7 944.0 L1386.8 937.9Z" fill="#9aeaa0"/>
<path d="M1377.7 967.4 L1380.7 979.6 L1384.8 987.8 L1393.0 991.8 L1390.9 994.9 L1382.8 989.8 L1377.7 981.6 L1375.6 971.5Z" fill="#46c092"/>
<path d="M1385.8 961.3 L1390.9 965.4 L1393.0 977.6 L1395.0 991.8 L1388.9 981.6 L1385.8 971.5Z" fill="#258a98"/>
<path d="M1397.0 975.5 L1403.1 978.6 L1407.2 984.7 L1401.1 994.9 L1395.0 992.9Z" fill="#23809a"/>
</g>
<path d="M1804.3 985.4 Q1806.9 978.9 1813.3 977.0 Q1817.0 970.6 1824.4 967.8 Q1831.9 958.5 1844.8 959.0 Q1863.3 961.3 1872.6 977.0 Q1878.1 986.3 1877.2 992.8 L1868.0 998.3 L1850.4 998.3 L1844.8 995.6 L1824.4 996.0 L1811.5 993.7Z" fill="#1d2452"/>
<path d="M1805.5 985.4 Q1807.8 979.8 1813.8 978.1 Q1818.0 971.5 1825.4 968.9 Q1832.3 959.9 1844.8 960.2 Q1862.4 962.2 1871.2 977.0 Q1876.3 985.4 1875.8 991.4 L1867.5 996.5 L1850.8 996.7 L1845.3 994.2 L1824.9 994.6 L1811.9 992.3Z" fill="#d9a98e"/>
<path d="M1825.4 968.9 Q1832.3 959.9 1844.8 960.2 Q1859.6 962.2 1867.0 972.4 Q1868.0 981.7 1863.3 988.1 Q1852.2 978.9 1839.3 977.0 Q1831.9 973.3 1825.4 968.9Z" fill="#f8dcb4"/>
<path d="M1813.8 978.1 Q1818.0 971.5 1825.4 969.6 Q1833.7 975.2 1840.2 980.7 Q1831.9 983.5 1824.4 980.7 Q1818.9 978.9 1813.8 978.1Z" fill="#fbe4bc"/>
<path d="M1806.4 985.4 Q1808.7 980.7 1814.3 979.4 Q1819.8 981.7 1821.7 986.3 Q1817.0 990.9 1811.5 990.9Z" fill="#eec7a0"/>
<path d="M1844.8 994.6 Q1846.7 988.1 1843.0 981.7 M1824.4 994.6 Q1826.3 988.1 1821.7 983.5" stroke="#4a3a6a" stroke-width="1.3" fill="none"/>
<path d="M1845.3 994.2 L1850.8 996.7 L1867.5 996.5 L1875.8 991.4 Q1872.6 988.1 1863.3 990.0 Q1854.1 991.9 1845.3 988.1Z" fill="#b48aa8"/>
<circle cx="1333.6" cy="967" r="9.6" fill="#5a628c" fill-opacity="0.25" stroke="#f6fbff" stroke-width="1.4"/>
<circle cx="1720.4" cy="884.5" r="7.2" fill="#ffffff" fill-opacity="0.18" stroke="#f6fbff" stroke-width="1.4"/>
<rect x="1321" y="740" width="1" height="283" fill="#5f90ea" opacity="0.4"/>
<g opacity="0.35" fill="none" stroke="#7ad0f4" stroke-width="1.4"><path d="M1313.5 795.5 H1330.5 V808.5 H1317.5 L1313.5 812.5Z"/><path d="M1322 798.600 V805.400 M1318.600 802 H1325.400"/></g>
<rect x="1268" y="1023" width="648" height="4.4" fill="#3a86e6"/>
<rect x="1264" y="1027.4" width="656" height="3" fill="#2a4ba4"/>
<rect x="1264" y="769" width="4" height="261.4" fill="#2a4ba4"/>
<rect x="1916" y="769" width="4" height="261.4" fill="#2a4ba4"/>
<rect x="1264" y="769" width="656" height="2.2" fill="#2a4ba4"/>
</svg>
<svg style="left:1645px;top:641px" width="248" height="70" viewBox="1645 641 248 70">
<path d="M1650 641 H1888 V643.5 H1890.5 V646 H1893 V706 H1890.5 V708.5 H1888 V711 H1650 V708.5 H1647.5 V706 H1645 V646 H1647.5 V643.5 H1650Z" fill="#2e4f74"/>
<path d="M1650 643.5 H1888 V646 H1890.5 V706 H1888 V708.5 H1650 V706 H1647.5 V646 H1650Z" fill="#7fb7e4"/>
<rect x="1652.5" y="648.5" width="233" height="55" fill="#8ecbf6"/>
<path d="M1664 655 H1696 V657.5 H1698.5 V660 H1701 V692 H1698.5 V694.5 H1696 V697 H1664 V694.5 H1661.500 V692 H1659 V660 H1661.500 V657.5 H1664Z" fill="#42599c"/>
<path d="M1664 657.5 H1696 V660 H1698.5 V692 H1696 V694.5 H1664 V692 H1661.500 V660 H1664Z" fill="#6087d6"/>
<path d="M1673.2 676 L1686.6 664.6 V687.4Z" fill="#fff" stroke="#1e2a66" stroke-width="3.4" stroke-linejoin="miter" paint-order="stroke"/>
<path d="M1712.5 655 H1823.5 V657.5 H1826 V660 H1828.5 V692 H1826 V694.5 H1823.5 V697 H1712.5 V694.5 H1710 V692 H1707.500 V660 H1710 V657.5 H1712.5Z" fill="#2b639c"/>
<path d="M1712.5 657.5 H1823.5 V660 H1826 V692 H1823.5 V694.5 H1712.5 V692 H1710 V660 H1712.5Z" fill="#3b93e6"/>
<rect x="1712.5" y="660" width="111" height="32" fill="#42a0f4"/>
<text transform="translate(0 -135.2) scale(1 1.2)" font-family="Liberation Mono, monospace" font-size="23" text-anchor="middle" x="1768.3" y="684" textLength="96" lengthAdjust="spacing" fill="#00f48c" stroke="#1a2a78" stroke-width="4.4" stroke-linejoin="round" paint-order="stroke">$100000</text>
<path d="M1840 655 H1874.5 V657.5 H1877 V660 H1879.5 V692 H1877 V694.5 H1874.5 V697 H1840 V694.5 H1837.5 V692 H1835 V660 H1837.5 V657.5 H1840Z" fill="#2b639c"/>
<path d="M1840 657.5 H1874.5 V660 H1877 V692 H1874.5 V694.5 H1840 V692 H1837.5 V660 H1840Z" fill="#3b93e6"/>
<rect x="1840" y="660" width="34.5" height="32" fill="#42a0f4"/>
<path d="M1857.2 664 L1860.6 668.2 H1858.3 V674.9 H1865 V672.6 L1869.2 676 L1865 679.4 V677.1 H1858.3 V683.8 H1860.6 L1857.2 688 L1853.8 683.8 H1856.1 V677.1 H1849.4 V679.4 L1845.2 676 L1849.4 672.6 V674.9 H1856.1 V668.2 H1853.8Z" fill="#fff" stroke="#1e2a66" stroke-width="3.4" stroke-linejoin="miter" paint-order="stroke"/>
</svg>

<div id="task"></div>
<!-- windows logo -->
<svg style="left:21px;top:1045px" width="23" height="23" viewBox="0 0 23 23"><defs><linearGradient id="wl" x1="0" y1="0" x2="1" y2="1"><stop offset="0" stop-color="#5ad0ff"/><stop offset="1" stop-color="#0a84e0"/></linearGradient></defs><rect x="0" y="0" width="10.8" height="10.8" rx="1" fill="url(#wl)"/><rect x="12.2" y="0" width="10.8" height="10.8" rx="1" fill="url(#wl)"/><rect x="0" y="12.2" width="10.8" height="10.8" rx="1" fill="url(#wl)"/><rect x="12.2" y="12.2" width="10.8" height="10.8" rx="1" fill="url(#wl)"/></svg>
<!-- task view -->
<svg style="left:65px;top:1045px" width="25" height="23" viewBox="0 0 25 23"><rect x="0.5" y="6.5" width="16" height="15" rx="2" fill="#6a6d66" stroke="#8c8f88"/><rect x="7.5" y="0.8" width="17" height="15" rx="2" fill="#ececec"/></svg>
<!-- folder 1 -->
<svg style="left:110px;top:1046px" width="22" height="20" viewBox="0 0 22 20"><path d="M1.2 1 H8 L10.2 3.4 H20 Q21.4 3.4 21.4 4.8 V17.6 Q21.4 19 20 19 H1.8 Q0.5 19 0.5 17.6 V2 Q0.5 1 1.2 1Z" fill="#e8a821"/><path d="M0.5 7 Q0.5 5.4 2 5.4 H20 Q21.4 5.4 21.4 7 V17.6 Q21.4 19 20 19 H1.8 Q0.5 19 0.5 17.6Z" fill="#fcd462"/></svg>
<span class="t" style="left:141px;top:1048.8px;line-height:17px;font-size:12.2px;font-weight:normal;color:#ffffff;letter-spacing:-0.122px;">Stuffs - File Explorer</span>
<div class="abs" style="left:118px;top:1072px;width:6px;height:3px;border-radius:1.5px;background:#8e918b"></div>
<!-- folder 2 -->
<svg style="left:270px;top:1046px" width="22" height="20" viewBox="0 0 22 20"><path d="M1.2 1 H8 L10.2 3.4 H20 Q21.4 3.4 21.4 4.8 V17.6 Q21.4 19 20 19 H1.8 Q0.5 19 0.5 17.6 V2 Q0.5 1 1.2 1Z" fill="#e8a821"/><path d="M0.5 7 Q0.5 5.4 2 5.4 H20 Q21.4 5.4 21.4 7 V17.6 Q21.4 19 20 19 H1.8 Q0.5 19 0.5 17.6Z" fill="#fcd462"/></svg>
<div class="abs" style="left:301px;top:1044px;width:128px;height:24px;overflow:hidden"><span class="t" style="left:0px;top:4.8px;line-height:17px;font-size:12.2px;font-weight:normal;color:#ffffff;letter-spacing:-0.131px;">LittleAquarium - File Exp</span></div>
<div class="abs" style="left:278px;top:1072px;width:6px;height:3px;border-radius:1.5px;background:#8e918b"></div>
<!-- chrome -->
<svg style="left:448px;top:1044px" width="25" height="25" viewBox="0 0 24 24"><circle cx="12" cy="12" r="11.5" fill="#fff"/><path d="M12 12 L2.04 6.25 A11.5 11.5 0 0 1 21.96 6.25 Z" fill="#ea4335"/><path d="M12 12 L21.96 6.25 A11.5 11.5 0 0 1 12 23.5 Z" fill="#fbbc04"/><path d="M12 12 L12 23.5 A11.5 11.5 0 0 1 2.04 6.25 Z" fill="#34a853"/><path d="M12 6.25 H21.96 A11.5 11.5 0 0 1 17 22.3 Z" fill="#fbbc04"/><path d="M7.02 14.9 L2.04 6.25 A11.5 11.5 0 0 0 12 23.5 Z" fill="#34a853"/><circle cx="12" cy="12" r="5.6" fill="#fff"/><circle cx="12" cy="12" r="4.4" fill="#1a73e8"/></svg>
<div class="abs" style="left:481px;top:1044px;width:129px;height:24px;overflow:hidden"><span class="t" style="left:0px;top:4.8px;line-height:17px;font-size:12.2px;font-weight:normal;color:#ffffff;letter-spacing:0.121px;">Untitled document - Go</span></div>
<div class="abs" style="left:458px;top:1072px;width:6px;height:3px;border-radius:1.5px;background:#8e918b"></div>
<!-- active app -->
<div class="abs" style="left:621px;top:1036px;width:132px;height:40px;border-radius:5px;background:#2c3226;border:1px solid #383e32"></div>
<svg style="left:631px;top:1046px" width="20" height="20" viewBox="0 0 20 20"><path d="M10 0.8 L18.2 5.4 V14.6 L10 19.2 L1.8 14.6 V5.4Z" fill="#d8d8d8"/><path d="M10 3.4 L15.8 6.8 V13.2 L10 16.6 L4.2 13.2 V6.8Z" fill="#2c3226"/><path d="M10 10 V16.6 M10 10 L4.2 6.8 M10 10 L15.8 6.8" stroke="#d8d8d8" stroke-width="1.8"/><path d="M10 0.8 V5 M1.8 14.6 L5.4 12.6 M18.2 14.6 L14.6 12.6" stroke="#2c3226" stroke-width="1.2"/></svg>
<span class="t" style="left:661px;top:1048.8px;line-height:17px;font-size:12.2px;font-weight:normal;color:#ffffff;letter-spacing:0.158px;">Little Aquarium</span>
<div class="abs" style="left:633px;top:1072px;width:16px;height:3px;border-radius:1.5px;background:#b9bcb6"></div>
<!-- tray -->
<svg style="left:1679px;top:1051px" width="12" height="9" viewBox="0 0 12 9"><path d="M1 7.4 L6 2.2 L11 7.4" fill="none" stroke="#fff" stroke-width="1.4"/></svg>
<svg style="left:1709px;top:1049px" width="16" height="15" viewBox="0 0 16 15"><path d="M4 0.4 L8 3 L4 5.6 L0 3Z M12 0.4 L16 3 L12 5.6 L8 3Z M4 5.8 L8 8.4 L4 11 L0 8.4Z M12 5.8 L16 8.4 L12 11 L8 8.4Z M8 9.6 L11.4 11.8 L8 14.2 L4.6 11.8Z" fill="#fff"/></svg>
<svg style="left:1740px;top:1049px" width="17" height="14" viewBox="0 0 17 14"><path d="M1 5 Q8.5 -2 16 5" fill="none" stroke="#fff" stroke-width="1.4"/><path d="M3.4 7.6 Q8.5 3 13.6 7.6" fill="none" stroke="#fff" stroke-width="1.4"/><path d="M5.8 10.2 Q8.5 7.8 11.2 10.2" fill="none" stroke="#fff" stroke-width="1.4"/><circle cx="8.5" cy="12.2" r="1.2" fill="#fff"/></svg>
<svg style="left:1764px;top:1049px" width="16" height="14" viewBox="0 0 16 14"><path d="M0.8 4.8 H3.4 L6.8 1.6 V12.4 L3.4 9.2 H0.8Z" fill="none" stroke="#fff" stroke-width="1.2" stroke-linejoin="round"/><path d="M9 4.6 Q10.6 7 9 9.4 M11 2.8 Q13.6 7 11 11.2" fill="none" stroke="#fff" stroke-width="1.1"/><path d="M13 1.2 Q16.4 7 13 12.8" fill="none" stroke="#8a8d86" stroke-width="1.1"/></svg>
<svg style="left:1787px;top:1048px" width="19" height="16" viewBox="0 0 19 16"><rect x="2" y="5" width="14" height="8.4" rx="1.6" fill="none" stroke="#fff" stroke-width="1.2"/><rect x="3.6" y="6.6" width="10.8" height="5.2" rx="0.6" fill="#fff"/><path d="M17 7.6 V10.8" stroke="#fff" stroke-width="1.6"/><path d="M3.4 0.6 L6.6 5.4 H1.2 L2.6 2.8 Z" fill="#fff"/></svg>
<span class="t" style="left:1833.5px;top:1040.3px;line-height:17px;font-size:12.2px;font-weight:normal;color:#ffffff;letter-spacing:-0.342px;">1:41 PM</span>
<span class="t" style="left:1821.5px;top:1056.3px;line-height:17px;font-size:12.2px;font-weight:normal;color:#ffffff;letter-spacing:0.141px;">7/15/2025</span>
<svg style="left:1884px;top:1048px" width="17" height="17" viewBox="0 0 17 17"><path d="M2 12.6 Q3.6 11 3.6 8 Q3.6 3.2 8 3.2 Q9.4 3.2 10.2 3.8 M12.4 8.4 Q12.4 11 14 12.6 H2" fill="none" stroke="#fff" stroke-width="1.2"/><path d="M6.4 14.4 Q8 16 9.6 14.4" fill="none" stroke="#fff" stroke-width="1.2"/><path d="M11.4 1.2 H15 L11.6 5.8 H15.4" fill="none" stroke="#fff" stroke-width="1.1"/></svg>

</body>
</html>
